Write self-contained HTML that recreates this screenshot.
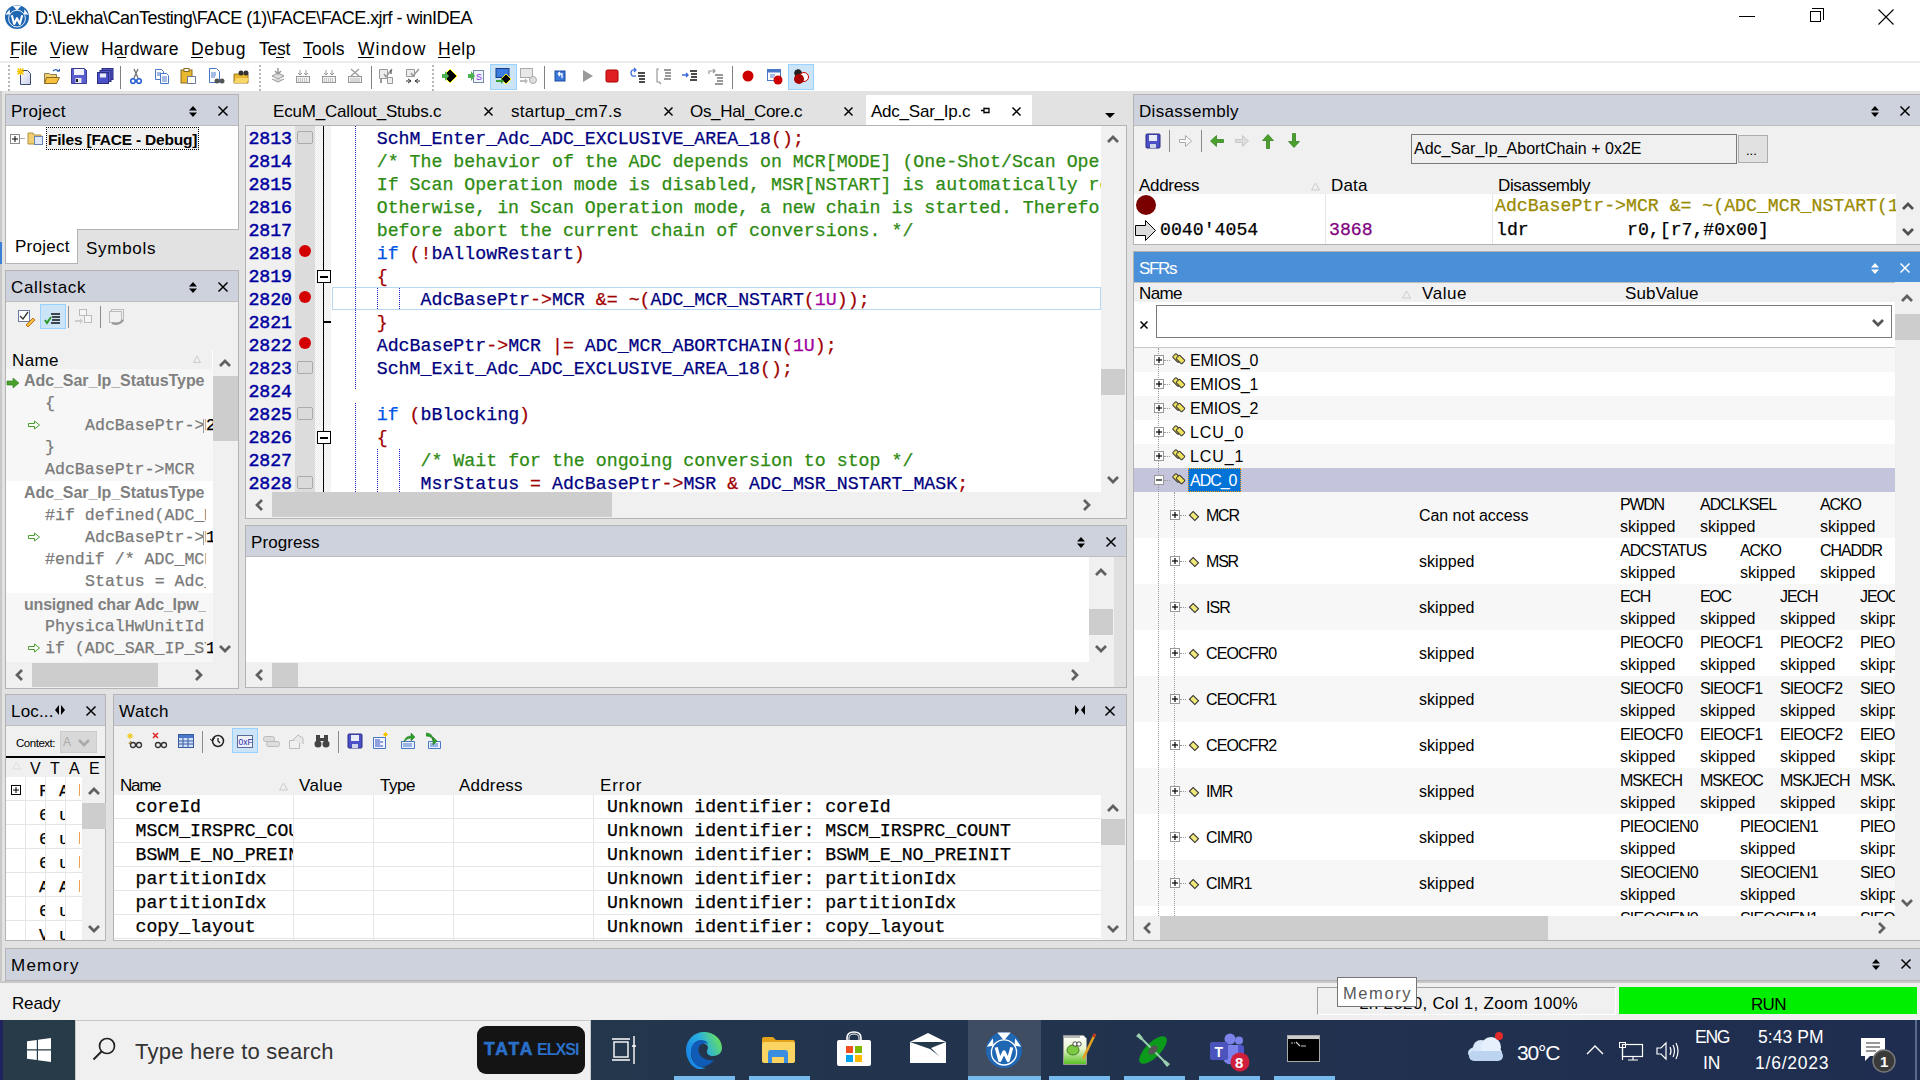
<!DOCTYPE html><html><head><meta charset="utf-8"><title>winIDEA</title><style>
*{margin:0;padding:0;box-sizing:border-box}
html,body{width:1920px;height:1080px;overflow:hidden;background:#e2e2e2}
.a{position:absolute}
.t{white-space:pre}
svg{position:absolute;overflow:visible}
</style></head><body><div class="a" style="left:0px;top:0px;width:1920px;height:91px;background:#ffffff;"></div>
<div class="a" style="left:0px;top:61px;width:1920px;height:2px;background:#ececec;"></div>
<div class="a" style="left:0px;top:91px;width:2px;height:929px;background:#c8c8c8;"></div>
<div class="a" style="left:0px;top:242px;width:2px;height:22px;background:#3a7fd5;"></div>
<svg style="left:5px;top:5px" width="24" height="24" viewBox="0 0 24 24"><circle cx="12" cy="12" r="12" fill="#1f66b3"/><path d="M7.5 0.4H16.5L12 5.6z" fill="#fff"/><path d="M0.5 9.8L4.6 4.2L5 9.2z" fill="#fff"/><path d="M23.5 9.8L19.4 4.2L19 9.2z" fill="#fff"/><circle cx="12" cy="13.6" r="8.4" fill="#1f66b3" stroke="#fff" stroke-width="0.9"/><path d="M6.8 10.2L9.2 19L12 13.2L14.8 19L17.2 10.2" fill="none" stroke="#fff" stroke-width="2.1" stroke-linejoin="round"/></svg>
<div class="a t" id="t1" style="left:35px;top:8.76px;font-family:'Liberation Sans',sans-serif;font-size:18px;line-height:18px;color:#000;letter-spacing:-0.513px;">D:\Lekha\CanTesting\FACE (1)\FACE\FACE.xjrf - winIDEA</div>
<div class="a" style="left:1739px;top:16px;width:16px;height:1px;background:#000;"></div>
<div class="a" style="left:1810px;top:11px;width:11px;height:11px;border:1px solid #000"></div>
<div class="a" style="left:1812px;top:8px;width:12px;height:12px;border-top:1px solid #000;border-right:1px solid #000"></div>
<svg style="left:1878px;top:9px" width="16" height="16"><path d="M0.5 0.5 L15.5 15.5 M15.5 0.5 L0.5 15.5" stroke="#000" stroke-width="1.1"/></svg>
<div class="a t" id="t2" style="left:10px;top:41.19px;font-family:'Liberation Sans',sans-serif;font-size:17.5px;line-height:17.5px;color:#000;letter-spacing:-0.234px;">File</div>
<div class="a t" id="t3" style="left:50px;top:41.19px;font-family:'Liberation Sans',sans-serif;font-size:17.5px;line-height:17.5px;color:#000;letter-spacing:0.292px;">View</div>
<div class="a t" id="t4" style="left:101px;top:41.19px;font-family:'Liberation Sans',sans-serif;font-size:17.5px;line-height:17.5px;color:#000;letter-spacing:0.232px;">Hardware</div>
<div class="a t" id="t5" style="left:191px;top:41.19px;font-family:'Liberation Sans',sans-serif;font-size:17.5px;line-height:17.5px;color:#000;letter-spacing:0.730px;">Debug</div>
<div class="a t" id="t6" style="left:259px;top:41.19px;font-family:'Liberation Sans',sans-serif;font-size:17.5px;line-height:17.5px;color:#000;letter-spacing:-0.203px;">Test</div>
<div class="a t" id="t7" style="left:303px;top:41.19px;font-family:'Liberation Sans',sans-serif;font-size:17.5px;line-height:17.5px;color:#000;letter-spacing:0.160px;">Tools</div>
<div class="a t" id="t8" style="left:358px;top:41.19px;font-family:'Liberation Sans',sans-serif;font-size:17.5px;line-height:17.5px;color:#000;letter-spacing:1.050px;">Window</div>
<div class="a t" id="t9" style="left:438px;top:41.19px;font-family:'Liberation Sans',sans-serif;font-size:17.5px;line-height:17.5px;color:#000;letter-spacing:0.500px;">Help</div>
<div class="a" style="left:10px;top:57px;width:9px;height:1px;background:#000;"></div>
<div class="a" style="left:50px;top:57px;width:10px;height:1px;background:#000;"></div>
<div class="a" style="left:117px;top:57px;width:9px;height:1px;background:#000;"></div>
<div class="a" style="left:191px;top:57px;width:12px;height:1px;background:#000;"></div>
<div class="a" style="left:276px;top:57px;width:8px;height:1px;background:#000;"></div>
<div class="a" style="left:303px;top:57px;width:9px;height:1px;background:#000;"></div>
<div class="a" style="left:358px;top:57px;width:16px;height:1px;background:#000;"></div>
<div class="a" style="left:438px;top:57px;width:12px;height:1px;background:#000;"></div>
<div class="a" style="left:8px;top:65px;width:2px;height:2px;background:#b8b8b8;"></div>
<div class="a" style="left:8px;top:69px;width:2px;height:2px;background:#b8b8b8;"></div>
<div class="a" style="left:8px;top:73px;width:2px;height:2px;background:#b8b8b8;"></div>
<div class="a" style="left:8px;top:77px;width:2px;height:2px;background:#b8b8b8;"></div>
<div class="a" style="left:8px;top:81px;width:2px;height:2px;background:#b8b8b8;"></div>
<div class="a" style="left:8px;top:85px;width:2px;height:2px;background:#b8b8b8;"></div>
<div class="a" style="left:8px;top:89px;width:2px;height:2px;background:#b8b8b8;"></div>
<svg style="left:17px;top:68px" width="16" height="16" viewBox="0 0 16 16"><defs><linearGradient id="nd" x1="0" y1="0" x2="1" y2="1"><stop offset="0" stop-color="#fff"/><stop offset="1" stop-color="#c8d0e8"/></linearGradient></defs><path d="M3.5 2.5h7l3 3v11h-10z" fill="url(#nd)" stroke="#3a4a75"/><path d="M0.5 0.5l6 6M6.5 0.5l-6 6M3.5 0v7M0 3.5h7" stroke="#f5c400" stroke-width="1.3"/></svg>
<svg style="left:44px;top:68px" width="16" height="16" viewBox="0 0 16 16"><path d="M0.5 5.5h5l1 1h6v9h-12z" fill="#f0d070" stroke="#8a7a50"/><path d="M2.5 9.5h13l-3 6h-12z" fill="#f5c040" stroke="#8a6a20"/><path d="M9 3q3-3 5.5 0.5" fill="none" stroke="#2d5fb0" stroke-width="1.2"/><path d="M13 3.5h3v-3z" fill="#2d5fb0"/></svg>
<svg style="left:71px;top:68px" width="16" height="16" viewBox="0 0 16 16"><path d="M0.5 0.5h13l2 2v13h-15z" fill="#5a5ed0" stroke="#3a3d90"/><rect x="3" y="1" width="10" height="6" fill="#f0f2fc"/><rect x="4.5" y="10" width="6" height="5" fill="#e8e8f0"/><rect x="5" y="11" width="2" height="3" fill="#222"/></svg>
<svg style="left:97px;top:68px" width="16" height="16" viewBox="0 0 16 16"><rect x="5" y="0.5" width="11" height="11" fill="#5559c8" stroke="#2a2d80"/><rect x="3" y="2.5" width="11" height="11" fill="#5559c8" stroke="#2a2d80"/><rect x="0.5" y="4.5" width="11" height="11" fill="#4b4fc8" stroke="#2a2d80"/><rect x="3" y="5.5" width="6" height="4" fill="#e8ecf8"/></svg>
<div class="a" style="left:120px;top:66px;width:1px;height:23px;background:#808080;"></div>
<svg style="left:128px;top:68px" width="16" height="16" viewBox="0 0 16 16"><path d="M6 1l4 9M10 1l-4 9" stroke="#707070" stroke-width="1.3"/><circle cx="5" cy="13" r="2.3" fill="none" stroke="#2a5fd0" stroke-width="1.6"/><circle cx="11" cy="13" r="2.3" fill="none" stroke="#2a5fd0" stroke-width="1.6"/></svg>
<svg style="left:154px;top:68px" width="16" height="16" viewBox="0 0 16 16"><path d="M1.5 1.5h6l2 2v8h-8z" fill="#fff" stroke="#4a78c8"/><path d="M6.5 5.5h6l2 2v8h-8z" fill="#fff" stroke="#4a78c8"/><path d="M3 5h4M3 7h4M8 9h5M8 11h5M8 13h5" stroke="#4a78c8"/></svg>
<svg style="left:180px;top:68px" width="16" height="16" viewBox="0 0 16 16"><rect x="1" y="2" width="11" height="13" fill="#e8b830" stroke="#8a6a20"/><rect x="4" y="0.5" width="5" height="3" fill="#fff" stroke="#8a6a20"/><path d="M7.5 8.5h8v7h-8z" fill="#fff" stroke="#6a7a95"/></svg>
<svg style="left:208px;top:68px" width="16" height="16" viewBox="0 0 16 16"><path d="M1.5 0.5h7l3 3v11h-10z" fill="#fff" stroke="#4a78c8"/><path d="M3 5h5M3 7h5M3 9h4" stroke="#4a78c8"/><circle cx="9" cy="13" r="2.5" fill="#555"/><circle cx="14" cy="13" r="2.5" fill="#555"/></svg>
<svg style="left:233px;top:68px" width="16" height="16" viewBox="0 0 16 16"><path d="M1 6h14v9H1z" fill="#e8b830" stroke="#9a7a20"/><path d="M3 10h13l-2 5H1z" fill="#f7d667"/><circle cx="8" cy="5" r="2.5" fill="#333"/><circle cx="13" cy="5" r="2.5" fill="#333"/></svg>
<div class="a" style="left:259px;top:65px;width:2px;height:2px;background:#b8b8b8;"></div>
<div class="a" style="left:259px;top:69px;width:2px;height:2px;background:#b8b8b8;"></div>
<div class="a" style="left:259px;top:73px;width:2px;height:2px;background:#b8b8b8;"></div>
<div class="a" style="left:259px;top:77px;width:2px;height:2px;background:#b8b8b8;"></div>
<div class="a" style="left:259px;top:81px;width:2px;height:2px;background:#b8b8b8;"></div>
<div class="a" style="left:259px;top:85px;width:2px;height:2px;background:#b8b8b8;"></div>
<div class="a" style="left:259px;top:89px;width:2px;height:2px;background:#b8b8b8;"></div>
<svg style="left:270px;top:68px" width="16" height="16" viewBox="0 0 16 16"><path d="M2 8l6-3 6 3-6 3z M2 11l6 3 6-3" fill="#ddd" stroke="#999"/><path d="M8 0v6M5 3l3 3 3-3" stroke="#999" stroke-width="1.5" fill="none"/></svg>
<svg style="left:295px;top:68px" width="16" height="16" viewBox="0 0 16 16"><rect x="1.5" y="8.5" width="13" height="6" fill="#f2f2f2" stroke="#999"/><path d="M3 11h1M5 11h1M7 11h1M9 11h1M11 11h1M3 13h1M5 13h1M7 13h1M9 13h1M11 13h1" stroke="#999"/><path d="M5 2v5M3 5l2 2 2-2M11 2v5M9 5l2 2 2-2" stroke="#999" fill="none"/></svg>
<svg style="left:321px;top:68px" width="16" height="16" viewBox="0 0 16 16"><rect x="1.5" y="8.5" width="13" height="6" fill="#f2f2f2" stroke="#999"/><path d="M3 11h1M5 11h1M7 11h1M9 11h1M11 11h1M3 13h1M5 13h1M7 13h1M9 13h1M11 13h1" stroke="#999"/><path d="M5 2v5M3 5l2 2 2-2M11 2v5M9 5l2 2 2-2" stroke="#999" fill="none"/></svg>
<svg style="left:347px;top:68px" width="16" height="16" viewBox="0 0 16 16"><rect x="1.5" y="8.5" width="13" height="6" fill="#f2f2f2" stroke="#999"/><path d="M3 11h10M3 13h10" stroke="#bbb"/><path d="M4 1l8 7M12 1l-8 7" stroke="#999" stroke-width="1.2"/></svg>
<div class="a" style="left:371px;top:66px;width:1px;height:23px;background:#808080;"></div>
<svg style="left:378px;top:68px" width="17" height="16" viewBox="0 0 17 16"><path d="M1.5 1.5h8v9h-8z" fill="#eee" stroke="#999"/><path d="M6 6l2 3 6-8" stroke="#999" stroke-width="1.5" fill="none"/><path d="M9.5 9.5h5v6h-5z" fill="#eee" stroke="#999"/><path d="M2 12h2M2 14h2M12 3h2M12 5h2" stroke="#333"/></svg>
<svg style="left:405px;top:68px" width="16" height="16" viewBox="0 0 16 16"><path d="M1.5 1.5h8v7h-8z" fill="#eee" stroke="#999"/><path d="M6 5l2 3 6-7" stroke="#999" stroke-width="1.5" fill="none"/><path d="M1 13h5M3 11l3 2-3 2M15 13h-5M13 11l-3 2 3 2" stroke="#333" fill="none"/></svg>
<div class="a" style="left:432px;top:65px;width:2px;height:2px;background:#b8b8b8;"></div>
<div class="a" style="left:432px;top:69px;width:2px;height:2px;background:#b8b8b8;"></div>
<div class="a" style="left:432px;top:73px;width:2px;height:2px;background:#b8b8b8;"></div>
<div class="a" style="left:432px;top:77px;width:2px;height:2px;background:#b8b8b8;"></div>
<div class="a" style="left:432px;top:81px;width:2px;height:2px;background:#b8b8b8;"></div>
<div class="a" style="left:432px;top:85px;width:2px;height:2px;background:#b8b8b8;"></div>
<div class="a" style="left:432px;top:89px;width:2px;height:2px;background:#b8b8b8;"></div>
<svg style="left:442px;top:68px" width="16" height="16" viewBox="0 0 16 16"><path d="M8 1l7 7-7 7-7-7z" fill="#000" stroke="#ff0"/><path d="M0 6h3V3l4 5-4 5v-3H0z" fill="#4caf50"/></svg>
<svg style="left:468px;top:68px" width="16" height="16" viewBox="0 0 16 16"><rect x="5.5" y="2.5" width="10" height="12" fill="#f0f4ff" stroke="#7a8aa5"/><text x="8" y="12" font-size="9" font-family="Liberation Sans" fill="#8a2be2">S</text><path d="M0 6h3V3l4 5-4 5v-3H0z" fill="#4caf50"/></svg>
<div class="a" style="left:490px;top:64px;width:27px;height:26px;background:#cce4f7;border:1px solid #99d1ff;"></div>
<svg style="left:495px;top:68px" width="16" height="17" viewBox="0 0 16 17"><rect x="1" y="0.5" width="13" height="9" fill="#3a7be0" stroke="#1a3a80"/><path d="M9 9l5 5-5 5-5-5z" fill="#000" stroke="#ff0" transform="translate(2,-3)"/><path d="M1 12h5v-2l3 3-3 3v-2H1z" fill="#3aa03a"/></svg>
<svg style="left:519px;top:68px" width="18" height="16" viewBox="0 0 18 16"><rect x="1.5" y="0.5" width="12" height="9" fill="#e8e8e8" stroke="#aaa"/><path d="M1 12h5v-2l3 3-3 3v-2H1z" fill="#bbb"/><circle cx="14" cy="12" r="3.5" fill="#ddd" stroke="#aaa"/></svg>
<div class="a" style="left:544px;top:66px;width:1px;height:23px;background:#808080;"></div>
<svg style="left:553px;top:68px" width="16" height="16" viewBox="0 0 16 16"><rect x="2" y="3" width="10" height="10" fill="#3b78d8" stroke="#1a4aa0"/><path d="M9 10V6H5M5 6l2-2M5 6l2 2" stroke="#fff" stroke-width="1.3" fill="none"/></svg>
<svg style="left:580px;top:68px" width="16" height="16" viewBox="0 0 16 16"><path d="M3 2l10 6-10 6z" fill="#9a9a9a"/></svg>
<svg style="left:604px;top:68px" width="16" height="16" viewBox="0 0 16 16"><rect x="2" y="2" width="12" height="12" rx="1.5" fill="#e02020" stroke="#a00"/></svg>
<svg style="left:630px;top:68px" width="16" height="16" viewBox="0 0 16 16"><path d="M1 5q0-4 5-3M4 0l2 2-2 2" stroke="#3a6ad8" stroke-width="1.3" fill="none"/><path d="M1 5q0 4 5 3" stroke="#3a6ad8" stroke-width="1.3" fill="none"/><path d="M8 5h7M8 8h7M9 11h6M9 14h6" stroke="#111" stroke-width="1.3"/></svg>
<svg style="left:656px;top:68px" width="16" height="16" viewBox="0 0 16 16"><path d="M3 1h-2v13h3M3 14l2 2" stroke="#999" stroke-width="1.2" fill="none"/><path d="M8 2h7M9 5h6M9 8h6M8 11h7" stroke="#333" stroke-width="1.1"/></svg>
<svg style="left:682px;top:68px" width="16" height="16" viewBox="0 0 16 16"><path d="M0 7h6M4 5l2 2-2 2" stroke="#3a6ad8" stroke-width="1.4" fill="none"/><path d="M8 3h7M9 6h6M9 9h6M8 12h7" stroke="#111" stroke-width="1.3"/></svg>
<svg style="left:708px;top:68px" width="16" height="16" viewBox="0 0 16 16"><path d="M1 6v-3h6M5 1l2 2-2 2" stroke="#999" stroke-width="1.2" fill="none"/><path d="M7 7h8M9 10h6M9 13h6M7 16h8" stroke="#333" stroke-width="1.1"/></svg>
<div class="a" style="left:732px;top:66px;width:1px;height:23px;background:#808080;"></div>
<svg style="left:742px;top:68px" width="16" height="16" viewBox="0 0 16 16"><circle cx="6" cy="8" r="5.5" fill="#c00"/></svg>
<svg style="left:767px;top:68px" width="16" height="17" viewBox="0 0 16 17"><rect x="0.5" y="1.5" width="13" height="11" fill="#fff" stroke="#4a78c8"/><rect x="1" y="2" width="12" height="2.5" fill="#4a78c8"/><path d="M3 7h5M3 9h4" stroke="#4a78c8"/><circle cx="11" cy="12" r="4.5" fill="#c00"/></svg>
<div class="a" style="left:788px;top:64px;width:26px;height:26px;background:#cce4f7;border:1px solid #99d1ff;"></div>
<svg style="left:793px;top:68px" width="16" height="16" viewBox="0 0 16 16"><circle cx="5" cy="5" r="3.5" fill="#222" stroke="#222" stroke-dasharray="1.5 1"/><circle cx="11" cy="9" r="4.5" fill="#fff" stroke="#c00"/><circle cx="6" cy="11" r="5" fill="#a00"/></svg>
<div class="a" style="left:5px;top:94px;width:234px;height:136px;background:#fff;border:1px solid #b4b4b4;"></div>
<div class="a" style="left:6px;top:95px;width:232px;height:30px;background:#cdd2dd;"></div>
<div class="a" style="left:6px;top:125px;width:232px;height:1px;background:#bdbdbd;"></div>
<div class="a t" id="t10" style="left:11px;top:102.61px;font-family:'Liberation Sans',sans-serif;font-size:17px;line-height:17px;color:#000;letter-spacing:0.263px;">Project</div>
<svg style="left:188px;top:104.5px" width="10" height="13" viewBox="0 0 10 13"><path d="M1 5.5L5 1L9 5.5z M1 7.5L5 12L9 7.5z" fill="#000"/></svg>
<svg style="left:217.5px;top:105.5px" width="10" height="10" viewBox="0 0 10 10"><path d="M0.5 0.5L9.5 9.5M9.5 0.5L0.5 9.5" stroke="#000" stroke-width="1.45"/></svg>
<svg style="left:10px;top:134px" width="10" height="10" viewBox="0 0 10 10"><rect x="0.5" y="0.5" width="9" height="9" fill="#fff" stroke="#888"/><path d="M2 5h6M5 2v6" stroke="#000"/></svg>
<div class="a" style="left:20px;top:138px;width:5px;height:1px;background:#aaa;"></div>
<svg style="left:27px;top:129px" width="17" height="17" viewBox="0 0 17 17"><path d="M1 4h5l1 2h7v9H1z" fill="#f0d070" stroke="#b09040"/><rect x="7.5" y="7.5" width="8" height="8" fill="#dfe8f8" stroke="#6a85b5"/></svg>
<div class="a" style="left:46px;top:127px;width:153px;height:23px;border:1px dotted #000;background:#f0f0f0"></div>
<div class="a t" id="t11" style="left:48px;top:131.88px;font-family:'Liberation Sans',sans-serif;font-size:15.5px;line-height:15.5px;color:#000;font-weight:700;letter-spacing:-0.200px;">Files [FACE - Debug]</div>
<div class="a" style="left:5px;top:229px;width:73px;height:35px;background:#fff;border:1px solid #b4b4b4;border-top:none"></div>
<div class="a t" id="t12" style="left:15px;top:237.61px;font-family:'Liberation Sans',sans-serif;font-size:17px;line-height:17px;color:#000;letter-spacing:0.263px;">Project</div>
<div class="a t" id="t13" style="left:86px;top:239.61px;font-family:'Liberation Sans',sans-serif;font-size:17px;line-height:17px;color:#000;letter-spacing:0.719px;">Symbols</div>
<div class="a" style="left:5px;top:270px;width:234px;height:419px;background:#f0f0f0;border:1px solid #b4b4b4;"></div>
<div class="a" style="left:6px;top:271px;width:232px;height:30px;background:#cdd2dd;"></div>
<div class="a" style="left:6px;top:301px;width:232px;height:1px;background:#bdbdbd;"></div>
<div class="a t" id="t14" style="left:11px;top:278.61px;font-family:'Liberation Sans',sans-serif;font-size:17px;line-height:17px;color:#000;letter-spacing:0.691px;">Callstack</div>
<svg style="left:188px;top:280.5px" width="10" height="13" viewBox="0 0 10 13"><path d="M1 5.5L5 1L9 5.5z M1 7.5L5 12L9 7.5z" fill="#000"/></svg>
<svg style="left:217.5px;top:281.5px" width="10" height="10" viewBox="0 0 10 10"><path d="M0.5 0.5L9.5 9.5M9.5 0.5L0.5 9.5" stroke="#000" stroke-width="1.45"/></svg>
<svg style="left:18px;top:310px" width="17" height="17" viewBox="0 0 17 17"><rect x="0.5" y="0.5" width="11" height="11" fill="#fff" stroke="#6a7aa5"/><path d="M2 6l3 3 5-7" stroke="#333" stroke-width="1.3" fill="none"/><path d="M8 15l7-7 2 2-7 7z" fill="#f0c040" stroke="#c07020"/></svg>
<div class="a" style="left:40px;top:304px;width:26px;height:25px;background:#cce4f7;border:1px solid #99d1ff;"></div>
<svg style="left:44px;top:308px" width="17" height="17" viewBox="0 0 17 17"><path d="M1 12l2 3 4-6" stroke="#2a9a2a" stroke-width="2" fill="none"/><path d="M7 6h9M8 9h8M8 12h8M7 15h9" stroke="#111" stroke-width="1.4"/></svg>
<div class="a" style="left:68px;top:306px;width:1px;height:22px;background:#8c8c8c;"></div>
<svg style="left:75px;top:309px" width="17" height="17" viewBox="0 0 17 17"><rect x="4.5" y="0.5" width="7" height="6" fill="#f5f5f5" stroke="#bbb"/><rect x="9.5" y="6.5" width="7" height="7" fill="#f5f5f5" stroke="#bbb"/><path d="M0 11h5v-2l3 3-3 3v-2H0z" fill="#ccc"/></svg>
<div class="a" style="left:100px;top:306px;width:1px;height:22px;background:#8c8c8c;"></div>
<svg style="left:108px;top:309px" width="17" height="17" viewBox="0 0 17 17"><rect x="3.5" y="0.5" width="12" height="11" fill="#f0f0f0" stroke="#bbb"/><rect x="1.5" y="2.5" width="12" height="11" fill="#f0f0f0" stroke="#bbb"/><path d="M4 14q6 3 11-3" stroke="#999" stroke-width="2" fill="none"/></svg>
<div class="a t" id="t15" style="left:12px;top:351.61px;font-family:'Liberation Sans',sans-serif;font-size:17px;line-height:17px;color:#000;letter-spacing:0.380px;">Name</div>
<div class="a" style="left:212px;top:350px;width:1px;height:19px;background:#fff;"></div>
<svg style="left:193px;top:355px" width="8" height="8" viewBox="0 0 8 8"><path d="M0.5 7.5L4 1L7.5 7.5z" fill="none" stroke="#ccc"/></svg>
<div class="a" style="left:6px;top:369px;width:207px;height:293px;overflow:hidden;background:#fff;">
<div class="a" style="left:0px;top:0px;width:207px;height:112px;background:#f7f7f7;"></div>
<div class="a" style="left:0px;top:224px;width:207px;height:69px;background:#f7f7f7;"></div>
<div class="a" style="left:0;top:0;width:200px;height:293px;overflow:hidden">
<svg style="left:1px;top:9px" width="12" height="10" viewBox="0 0 12 10"><path d="M0 3h6V0l6 5-6 5V7H0z" fill="#4aa02a" stroke="#2a7a1a" stroke-width="0.6"/></svg>
<div class="a t" id="t16" style="left:18px;top:4.46px;font-family:'Liberation Sans',sans-serif;font-size:16px;line-height:16px;color:#808080;font-weight:700;letter-spacing:-0.075px;">Adc_Sar_Ip_StatusType</div>
<div class="a t" id="t17" style="left:39px;top:27.28px;font-family:'Liberation Mono',monospace;font-size:16.6px;line-height:16.6px;color:#7a7a7a;-webkit-text-stroke-width:0.25px;">{</div>
<svg style="left:22px;top:51px" width="12" height="10" viewBox="0 0 12 10"><path d="M0.5 3.5h6V1l5 4-5 4V6.5h-6z" fill="#fff" stroke="#4aa02a"/></svg>
<div class="a t" id="t18" style="left:79px;top:49.28px;font-family:'Liberation Mono',monospace;font-size:16.6px;line-height:16.6px;color:#7a7a7a;-webkit-text-stroke-width:0.25px;">AdcBasePtr-&gt;MCR &amp;= ~(ADC_MCR_NSTART(1U));</div>
<div class="a t" id="t19" style="left:39px;top:71.28px;font-family:'Liberation Mono',monospace;font-size:16.6px;line-height:16.6px;color:#7a7a7a;-webkit-text-stroke-width:0.25px;">}</div>
<div class="a t" id="t20" style="left:39px;top:93.28px;font-family:'Liberation Mono',monospace;font-size:16.6px;line-height:16.6px;color:#7a7a7a;-webkit-text-stroke-width:0.25px;">AdcBasePtr-&gt;MCR</div>
<div class="a t" id="t21" style="left:18px;top:116.46px;font-family:'Liberation Sans',sans-serif;font-size:16px;line-height:16px;color:#808080;font-weight:700;letter-spacing:-0.075px;">Adc_Sar_Ip_StatusType</div>
<div class="a t" id="t22" style="left:39px;top:139.28px;font-family:'Liberation Mono',monospace;font-size:16.6px;line-height:16.6px;color:#7a7a7a;-webkit-text-stroke-width:0.25px;">#if defined(ADC_MCR_ACKO_MASK)</div>
<svg style="left:22px;top:163px" width="12" height="10" viewBox="0 0 12 10"><path d="M0.5 3.5h6V1l5 4-5 4V6.5h-6z" fill="#fff" stroke="#4aa02a"/></svg>
<div class="a t" id="t23" style="left:79px;top:161.28px;font-family:'Liberation Mono',monospace;font-size:16.6px;line-height:16.6px;color:#7a7a7a;-webkit-text-stroke-width:0.25px;">AdcBasePtr-&gt;MCR</div>
<div class="a t" id="t24" style="left:39px;top:183.28px;font-family:'Liberation Mono',monospace;font-size:16.6px;line-height:16.6px;color:#7a7a7a;-webkit-text-stroke-width:0.25px;">#endif /* ADC_MCR_ACKO_MASK */</div>
<div class="a t" id="t25" style="left:79px;top:205.28px;font-family:'Liberation Mono',monospace;font-size:16.6px;line-height:16.6px;color:#7a7a7a;-webkit-text-stroke-width:0.25px;">Status = Adc_Sar_CheckAck</div>
<div class="a t" id="t26" style="left:18px;top:228.46px;font-family:'Liberation Sans',sans-serif;font-size:16px;line-height:16px;color:#808080;font-weight:700;letter-spacing:-0.209px;">unsigned char Adc_Ipw_</div>
<div class="a t" id="t27" style="left:39px;top:250.28px;font-family:'Liberation Mono',monospace;font-size:16.6px;line-height:16.6px;color:#7a7a7a;-webkit-text-stroke-width:0.25px;">PhysicalHwUnitId</div>
<svg style="left:22px;top:274px" width="12" height="10" viewBox="0 0 12 10"><path d="M0.5 3.5h6V1l5 4-5 4V6.5h-6z" fill="#fff" stroke="#4aa02a"/></svg>
<div class="a t" id="t28" style="left:39px;top:272.28px;font-family:'Liberation Mono',monospace;font-size:16.6px;line-height:16.6px;color:#7a7a7a;-webkit-text-stroke-width:0.25px;">if (ADC_SAR_IP_STATUS_SUCCESS</div>
</div>
<div class="a" style="left:197px;top:50px;width:1px;height:14px;background:#999;"></div>
<div class="a t" id="t29" style="left:200px;top:49.28px;font-family:'Liberation Mono',monospace;font-size:16.6px;line-height:16.6px;color:#000;-webkit-text-stroke-width:0.25px;">2820</div>
<div class="a" style="left:197px;top:162px;width:1px;height:14px;background:#999;"></div>
<div class="a t" id="t30" style="left:200px;top:161.28px;font-family:'Liberation Mono',monospace;font-size:16.6px;line-height:16.6px;color:#000;-webkit-text-stroke-width:0.25px;">1</div>
<div class="a t" id="t31" style="left:200px;top:272.28px;font-family:'Liberation Mono',monospace;font-size:16.6px;line-height:16.6px;color:#000;-webkit-text-stroke-width:0.25px;">1</div>
</div>
<svg style="left:219.0px;top:358.5px" width="12" height="9" viewBox="0 0 12 9"><path d="M1 7L6 2L11 7" fill="none" stroke="#606060" stroke-width="2.7"/></svg>
<div class="a" style="left:213px;top:376px;width:25px;height:65px;background:#cdcdcd;"></div>
<svg style="left:219.0px;top:643.5px" width="12" height="9" viewBox="0 0 12 9"><path d="M1 2L6 7L11 2" fill="none" stroke="#606060" stroke-width="2.7"/></svg>
<svg style="left:14.5px;top:669.0px" width="9" height="12" viewBox="0 0 9 12"><path d="M7 1L2 6L7 11" fill="none" stroke="#606060" stroke-width="2.7"/></svg>
<div class="a" style="left:32px;top:663px;width:126px;height:24px;background:#cdcdcd;"></div>
<svg style="left:193.5px;top:669.0px" width="9" height="12" viewBox="0 0 9 12"><path d="M2 1L7 6L2 11" fill="none" stroke="#606060" stroke-width="2.7"/></svg>
<div class="a" style="left:5px;top:694px;width:101px;height:247px;background:#f0f0f0;border:1px solid #b4b4b4;"></div>
<div class="a" style="left:6px;top:695px;width:99px;height:30px;background:#cdd2dd;"></div>
<div class="a" style="left:6px;top:725px;width:99px;height:1px;background:#bdbdbd;"></div>
<div class="a t" id="t32" style="left:11px;top:702.61px;font-family:'Liberation Sans',sans-serif;font-size:17px;line-height:17px;color:#000;letter-spacing:0.181px;">Loc...</div>
<svg style="left:55px;top:705px" width="10" height="10" viewBox="0 0 10 10"><path d="M4 0L0 5L4 10z M6 0L10 5L6 10z" fill="#000"/></svg>
<svg style="left:85.5px;top:705.5px" width="10" height="10" viewBox="0 0 10 10"><path d="M0.5 0.5L9.5 9.5M9.5 0.5L0.5 9.5" stroke="#000" stroke-width="1.45"/></svg>
<div class="a t" id="t33" style="left:16px;top:738.27px;font-family:'Liberation Sans',sans-serif;font-size:11.5px;line-height:11.5px;color:#000;letter-spacing:-0.475px;">Context:</div>
<div class="a" style="left:60px;top:731px;width:37px;height:22px;background:#d8d8d8;border:1px solid #ccc;"></div>
<div class="a t" id="t34" style="left:63px;top:735.84px;font-family:'Liberation Sans',sans-serif;font-size:12px;line-height:12px;color:#aaa;">A</div>
<svg style="left:78.0px;top:737.5px" width="12" height="9" viewBox="0 0 12 9"><path d="M1 2L6 7L11 2" fill="none" stroke="#aaa" stroke-width="2.7"/></svg>
<div class="a" style="left:6px;top:756px;width:99px;height:2px;background:#000;"></div>
<svg style="left:12px;top:761px" width="10" height="10" viewBox="0 0 10 10"><path d="M0.5 8L4.5 1L8.5 8z" fill="none" stroke="#ddd"/></svg>
<div class="a t" id="t35" style="left:30px;top:761.46px;font-family:'Liberation Sans',sans-serif;font-size:16px;line-height:16px;color:#000;">V</div>
<div class="a t" id="t36" style="left:50px;top:761.46px;font-family:'Liberation Sans',sans-serif;font-size:16px;line-height:16px;color:#000;">T</div>
<div class="a t" id="t37" style="left:69px;top:761.46px;font-family:'Liberation Sans',sans-serif;font-size:16px;line-height:16px;color:#000;">A</div>
<div class="a t" id="t38" style="left:89px;top:761.46px;font-family:'Liberation Sans',sans-serif;font-size:16px;line-height:16px;color:#000;">E</div>
<div class="a" style="left:6px;top:777px;width:76px;height:163px;overflow:hidden;background:#fff;">
<div class="a" style="left:0px;top:23px;width:76px;height:1px;background:#e6e6e6;"></div>
<div class="a" style="left:0px;top:47px;width:76px;height:1px;background:#e6e6e6;"></div>
<div class="a" style="left:0px;top:71px;width:76px;height:1px;background:#e6e6e6;"></div>
<div class="a" style="left:0px;top:95px;width:76px;height:1px;background:#e6e6e6;"></div>
<div class="a" style="left:0px;top:119px;width:76px;height:1px;background:#e6e6e6;"></div>
<div class="a" style="left:0px;top:143px;width:76px;height:1px;background:#e6e6e6;"></div>
<div class="a" style="left:0px;top:167px;width:76px;height:1px;background:#e6e6e6;"></div>
<div class="a" style="left:19px;top:0px;width:1px;height:163px;background:#e6e6e6;"></div>
<div class="a" style="left:39px;top:0px;width:1px;height:163px;background:#e6e6e6;"></div>
<div class="a" style="left:59px;top:0px;width:1px;height:163px;background:#e6e6e6;"></div>
<svg style="left:5px;top:8px" width="10" height="10" viewBox="0 0 10 10"><rect x="0.5" y="0.5" width="9" height="9" fill="#fff" stroke="#000"/><path d="M2 5h6M5 2v6" stroke="#000"/></svg>
<div class="a" style="left:20px;top:0px;width:19px;height:23px;overflow:hidden;">
<div class="a t" id="t39" style="left:13px;top:5.97px;font-family:'Liberation Mono',monospace;font-size:17px;line-height:17px;color:#000;-webkit-text-stroke-width:0.25px;">F</div>
</div>
<div class="a" style="left:40px;top:0px;width:19px;height:23px;overflow:hidden;">
<div class="a t" id="t40" style="left:13px;top:5.97px;font-family:'Liberation Mono',monospace;font-size:17px;line-height:17px;color:#000;-webkit-text-stroke-width:0.25px;">A</div>
</div>
<div class="a" style="left:73px;top:7px;width:1px;height:12px;background:#f0a050;"></div>
<div class="a" style="left:20px;top:24px;width:19px;height:23px;overflow:hidden;">
<div class="a t" id="t41" style="left:13px;top:5.97px;font-family:'Liberation Mono',monospace;font-size:17px;line-height:17px;color:#000;-webkit-text-stroke-width:0.25px;">6</div>
</div>
<div class="a" style="left:40px;top:24px;width:19px;height:23px;overflow:hidden;">
<div class="a t" id="t42" style="left:13px;top:5.97px;font-family:'Liberation Mono',monospace;font-size:17px;line-height:17px;color:#000;-webkit-text-stroke-width:0.25px;">u</div>
</div>
<div class="a" style="left:20px;top:48px;width:19px;height:23px;overflow:hidden;">
<div class="a t" id="t43" style="left:13px;top:5.97px;font-family:'Liberation Mono',monospace;font-size:17px;line-height:17px;color:#000;-webkit-text-stroke-width:0.25px;">6</div>
</div>
<div class="a" style="left:40px;top:48px;width:19px;height:23px;overflow:hidden;">
<div class="a t" id="t44" style="left:13px;top:5.97px;font-family:'Liberation Mono',monospace;font-size:17px;line-height:17px;color:#000;-webkit-text-stroke-width:0.25px;">u</div>
</div>
<div class="a" style="left:73px;top:55px;width:1px;height:12px;background:#f0a050;"></div>
<div class="a" style="left:20px;top:72px;width:19px;height:23px;overflow:hidden;">
<div class="a t" id="t45" style="left:13px;top:5.97px;font-family:'Liberation Mono',monospace;font-size:17px;line-height:17px;color:#000;-webkit-text-stroke-width:0.25px;">6</div>
</div>
<div class="a" style="left:40px;top:72px;width:19px;height:23px;overflow:hidden;">
<div class="a t" id="t46" style="left:13px;top:5.97px;font-family:'Liberation Mono',monospace;font-size:17px;line-height:17px;color:#000;-webkit-text-stroke-width:0.25px;">u</div>
</div>
<div class="a" style="left:73px;top:79px;width:1px;height:12px;background:#f0a050;"></div>
<div class="a" style="left:20px;top:96px;width:19px;height:23px;overflow:hidden;">
<div class="a t" id="t47" style="left:13px;top:5.97px;font-family:'Liberation Mono',monospace;font-size:17px;line-height:17px;color:#000;-webkit-text-stroke-width:0.25px;">A</div>
</div>
<div class="a" style="left:40px;top:96px;width:19px;height:23px;overflow:hidden;">
<div class="a t" id="t48" style="left:13px;top:5.97px;font-family:'Liberation Mono',monospace;font-size:17px;line-height:17px;color:#000;-webkit-text-stroke-width:0.25px;">A</div>
</div>
<div class="a" style="left:73px;top:103px;width:1px;height:12px;background:#f0a050;"></div>
<div class="a" style="left:20px;top:120px;width:19px;height:23px;overflow:hidden;">
<div class="a t" id="t49" style="left:13px;top:5.97px;font-family:'Liberation Mono',monospace;font-size:17px;line-height:17px;color:#000;-webkit-text-stroke-width:0.25px;">6</div>
</div>
<div class="a" style="left:40px;top:120px;width:19px;height:23px;overflow:hidden;">
<div class="a t" id="t50" style="left:13px;top:5.97px;font-family:'Liberation Mono',monospace;font-size:17px;line-height:17px;color:#000;-webkit-text-stroke-width:0.25px;">u</div>
</div>
<div class="a" style="left:20px;top:144px;width:19px;height:23px;overflow:hidden;">
<div class="a t" id="t51" style="left:13px;top:5.97px;font-family:'Liberation Mono',monospace;font-size:17px;line-height:17px;color:#000;-webkit-text-stroke-width:0.25px;">V</div>
</div>
<div class="a" style="left:40px;top:144px;width:19px;height:23px;overflow:hidden;">
<div class="a t" id="t52" style="left:13px;top:5.97px;font-family:'Liberation Mono',monospace;font-size:17px;line-height:17px;color:#000;-webkit-text-stroke-width:0.25px;">u</div>
</div>
</div>
<svg style="left:88.0px;top:786.5px" width="12" height="9" viewBox="0 0 12 9"><path d="M1 7L6 2L11 7" fill="none" stroke="#606060" stroke-width="2.7"/></svg>
<div class="a" style="left:82px;top:803px;width:24px;height:26px;background:#cdcdcd;"></div>
<svg style="left:88.0px;top:923.5px" width="12" height="9" viewBox="0 0 12 9"><path d="M1 2L6 7L11 2" fill="none" stroke="#606060" stroke-width="2.7"/></svg>
<div class="a" style="left:245px;top:91px;width:882px;height:34px;background:#e2e2e2;"></div>
<div class="a" style="left:866px;top:95px;width:166px;height:30px;background:#fff;"></div>
<div class="a t" id="t53" style="left:273px;top:102.61px;font-family:'Liberation Sans',sans-serif;font-size:17px;line-height:17px;color:#000;letter-spacing:-0.183px;">EcuM_Callout_Stubs.c</div>
<svg style="left:484.0px;top:106.5px" width="9" height="9" viewBox="0 0 9 9"><path d="M0.5 0.5L8.5 8.5M8.5 0.5L0.5 8.5" stroke="#000" stroke-width="1.45"/></svg>
<div class="a t" id="t54" style="left:511px;top:102.61px;font-family:'Liberation Sans',sans-serif;font-size:17px;line-height:17px;color:#000;letter-spacing:0.311px;">startup_cm7.s</div>
<svg style="left:663.5px;top:106.5px" width="9" height="9" viewBox="0 0 9 9"><path d="M0.5 0.5L8.5 8.5M8.5 0.5L0.5 8.5" stroke="#000" stroke-width="1.45"/></svg>
<div class="a t" id="t55" style="left:690px;top:102.61px;font-family:'Liberation Sans',sans-serif;font-size:17px;line-height:17px;color:#000;letter-spacing:-0.310px;">Os_Hal_Core.c</div>
<svg style="left:844.0px;top:106.5px" width="9" height="9" viewBox="0 0 9 9"><path d="M0.5 0.5L8.5 8.5M8.5 0.5L0.5 8.5" stroke="#000" stroke-width="1.45"/></svg>
<div class="a t" id="t56" style="left:871px;top:102.61px;font-family:'Liberation Sans',sans-serif;font-size:17px;line-height:17px;color:#000;letter-spacing:-0.233px;">Adc_Sar_Ip.c</div>
<svg style="left:981px;top:106px" width="10" height="10" viewBox="0 0 10 10"><path d="M0 4.5h3M3 1.5v6M3 2.5h5v4H3" fill="none" stroke="#000" stroke-width="1.3"/></svg>
<svg style="left:1012.0px;top:106.5px" width="9" height="9" viewBox="0 0 9 9"><path d="M0.5 0.5L8.5 8.5M8.5 0.5L0.5 8.5" stroke="#000" stroke-width="1.45"/></svg>
<svg style="left:1105px;top:113px" width="10" height="6" viewBox="0 0 10 6"><path d="M0 0h10L5 5z" fill="#000"/></svg>
<div class="a" style="left:245px;top:125px;width:882px;height:394px;background:#fff;border:1px solid #b4b4b4;"></div>
<div class="a" style="left:246px;top:126px;width:49px;height:366px;background:#f0f0f0;"></div>
<div class="a" style="left:295px;top:126px;width:20px;height:366px;background:#dcdcdc;"></div>
<div class="a" style="left:315px;top:126px;width:16px;height:366px;background:repeating-conic-gradient(#ececec 0 25%,#fafafa 0 50%) 0 0/2px 2px;"></div>
<div class="a" style="left:323px;top:126px;width:1px;height:366px;background:#000;"></div>
<div class="a" style="left:317px;top:270px;width:14px;height:13px;background:#fff;border:1.5px solid #000;"></div>
<div class="a" style="left:320px;top:276px;width:8px;height:1.5px;background:#000;"></div>
<div class="a" style="left:317px;top:431px;width:14px;height:13px;background:#fff;border:1.5px solid #000;"></div>
<div class="a" style="left:320px;top:437px;width:8px;height:1.5px;background:#000;"></div>
<div class="a" style="left:323px;top:321px;width:8px;height:1.5px;background:#000;"></div>
<div class="a" style="left:332px;top:287px;width:769px;height:23px;border:1px solid #b8d8f4;"></div>
<div class="a" style="left:355px;top:126px;width:1px;height:263px;border-left:1px dotted #2020c0;"></div>
<div class="a" style="left:355px;top:403px;width:1px;height:89px;border-left:1px dotted #2020c0;"></div>
<div class="a" style="left:377px;top:288px;width:1px;height:21px;border-left:1px dotted #2020c0;"></div>
<div class="a" style="left:399px;top:288px;width:1px;height:21px;border-left:1px dotted #2020c0;"></div>
<div class="a" style="left:377px;top:449px;width:1px;height:43px;border-left:1px dotted #2020c0;"></div>
<div class="a" style="left:399px;top:449px;width:1px;height:43px;border-left:1px dotted #2020c0;"></div>
<div class="a" style="left:246px;top:126px;width:855px;height:366px;overflow:hidden;">
<div class="a t" id="t57" style="left:2.5px;top:4.01px;font-family:'Liberation Mono',monospace;font-size:18.25px;line-height:18.25px;color:#0000a0;letter-spacing:-0.104px;-webkit-text-stroke:0.45px #0000a0;">2813</div>
<div class="a" style="left:51px;top:5px;width:16px;height:13px;background:#dadada;border:1px solid #ababab;border-radius:2px;"></div>
<div class="a t" id="t58" style="left:86.89999999999998px;top:4.01px;font-family:'Liberation Mono',monospace;font-size:18.25px;line-height:18.25px;color:#000080;-webkit-text-stroke-width:0.25px;">    <span style="color:#000080">SchM_Enter_Adc_ADC_EXCLUSIVE_AREA_18</span><span style="color:#a00000">(</span><span style="color:#a00000">)</span><span style="color:#a00000">;</span></div>
<div class="a t" id="t59" style="left:2.5px;top:27.01px;font-family:'Liberation Mono',monospace;font-size:18.25px;line-height:18.25px;color:#0000a0;letter-spacing:-0.104px;-webkit-text-stroke:0.45px #0000a0;">2814</div>
<div class="a t" id="t60" style="left:86.89999999999998px;top:27.01px;font-family:'Liberation Mono',monospace;font-size:18.25px;line-height:18.25px;color:#000080;-webkit-text-stroke-width:0.25px;"><span style="color:#2e8b12">    /* The behavior of the ADC depends on MCR[MODE] (One-Shot/Scan Operation).</span></div>
<div class="a t" id="t61" style="left:2.5px;top:50.01px;font-family:'Liberation Mono',monospace;font-size:18.25px;line-height:18.25px;color:#0000a0;letter-spacing:-0.104px;-webkit-text-stroke:0.45px #0000a0;">2815</div>
<div class="a t" id="t62" style="left:86.89999999999998px;top:50.01px;font-family:'Liberation Mono',monospace;font-size:18.25px;line-height:18.25px;color:#000080;-webkit-text-stroke-width:0.25px;"><span style="color:#2e8b12">    If Scan Operation mode is disabled, MSR[NSTART] is automatically reset</span></div>
<div class="a t" id="t63" style="left:2.5px;top:73.01px;font-family:'Liberation Mono',monospace;font-size:18.25px;line-height:18.25px;color:#0000a0;letter-spacing:-0.104px;-webkit-text-stroke:0.45px #0000a0;">2816</div>
<div class="a t" id="t64" style="left:86.89999999999998px;top:73.01px;font-family:'Liberation Mono',monospace;font-size:18.25px;line-height:18.25px;color:#000080;-webkit-text-stroke-width:0.25px;"><span style="color:#2e8b12">    Otherwise, in Scan Operation mode, a new chain is started. Therefore</span></div>
<div class="a t" id="t65" style="left:2.5px;top:96.01px;font-family:'Liberation Mono',monospace;font-size:18.25px;line-height:18.25px;color:#0000a0;letter-spacing:-0.104px;-webkit-text-stroke:0.45px #0000a0;">2817</div>
<div class="a t" id="t66" style="left:86.89999999999998px;top:96.01px;font-family:'Liberation Mono',monospace;font-size:18.25px;line-height:18.25px;color:#000080;-webkit-text-stroke-width:0.25px;"><span style="color:#2e8b12">    before abort the current chain of conversions. */</span></div>
<div class="a t" id="t67" style="left:2.5px;top:119.01px;font-family:'Liberation Mono',monospace;font-size:18.25px;line-height:18.25px;color:#0000a0;letter-spacing:-0.104px;-webkit-text-stroke:0.45px #0000a0;">2818</div>
<svg style="left:53px;top:119px" width="12" height="12" viewBox="0 0 12 12"><circle cx="6" cy="6" r="6" fill="#d40000"/></svg>
<div class="a t" id="t68" style="left:86.89999999999998px;top:119.01px;font-family:'Liberation Mono',monospace;font-size:18.25px;line-height:18.25px;color:#000080;-webkit-text-stroke-width:0.25px;">    <span style="color:#0055e6">if</span> <span style="color:#a00000">(</span><span style="color:#a00000">!</span><span style="color:#000080">bAllowRestart</span><span style="color:#a00000">)</span></div>
<div class="a t" id="t69" style="left:2.5px;top:142.01px;font-family:'Liberation Mono',monospace;font-size:18.25px;line-height:18.25px;color:#0000a0;letter-spacing:-0.104px;-webkit-text-stroke:0.45px #0000a0;">2819</div>
<div class="a t" id="t70" style="left:86.89999999999998px;top:142.01px;font-family:'Liberation Mono',monospace;font-size:18.25px;line-height:18.25px;color:#000080;-webkit-text-stroke-width:0.25px;">    <span style="color:#a00000">{</span></div>
<div class="a t" id="t71" style="left:2.5px;top:165.01px;font-family:'Liberation Mono',monospace;font-size:18.25px;line-height:18.25px;color:#0000a0;letter-spacing:-0.104px;-webkit-text-stroke:0.45px #0000a0;">2820</div>
<svg style="left:53px;top:165px" width="12" height="12" viewBox="0 0 12 12"><circle cx="6" cy="6" r="6" fill="#d40000"/></svg>
<div class="a t" id="t72" style="left:86.89999999999998px;top:165.01px;font-family:'Liberation Mono',monospace;font-size:18.25px;line-height:18.25px;color:#000080;-webkit-text-stroke-width:0.25px;">        <span style="color:#000080">AdcBasePtr</span><span style="color:#a00000">-</span><span style="color:#a00000">&gt;</span><span style="color:#000080">MCR</span> <span style="color:#a00000">&amp;</span><span style="color:#a00000">=</span> <span style="color:#a00000">~</span><span style="color:#a00000">(</span><span style="color:#000080">ADC_MCR_NSTART</span><span style="color:#a00000">(</span><span style="color:#a000a0">1U</span><span style="color:#a00000">)</span><span style="color:#a00000">)</span><span style="color:#a00000">;</span></div>
<div class="a t" id="t73" style="left:2.5px;top:188.01px;font-family:'Liberation Mono',monospace;font-size:18.25px;line-height:18.25px;color:#0000a0;letter-spacing:-0.104px;-webkit-text-stroke:0.45px #0000a0;">2821</div>
<div class="a t" id="t74" style="left:86.89999999999998px;top:188.01px;font-family:'Liberation Mono',monospace;font-size:18.25px;line-height:18.25px;color:#000080;-webkit-text-stroke-width:0.25px;">    <span style="color:#a00000">}</span></div>
<div class="a t" id="t75" style="left:2.5px;top:211.01px;font-family:'Liberation Mono',monospace;font-size:18.25px;line-height:18.25px;color:#0000a0;letter-spacing:-0.104px;-webkit-text-stroke:0.45px #0000a0;">2822</div>
<svg style="left:53px;top:211px" width="12" height="12" viewBox="0 0 12 12"><circle cx="6" cy="6" r="6" fill="#d40000"/></svg>
<div class="a t" id="t76" style="left:86.89999999999998px;top:211.01px;font-family:'Liberation Mono',monospace;font-size:18.25px;line-height:18.25px;color:#000080;-webkit-text-stroke-width:0.25px;">    <span style="color:#000080">AdcBasePtr</span><span style="color:#a00000">-</span><span style="color:#a00000">&gt;</span><span style="color:#000080">MCR</span> <span style="color:#a00000">|</span><span style="color:#a00000">=</span> <span style="color:#000080">ADC_MCR_ABORTCHAIN</span><span style="color:#a00000">(</span><span style="color:#a000a0">1U</span><span style="color:#a00000">)</span><span style="color:#a00000">;</span></div>
<div class="a t" id="t77" style="left:2.5px;top:234.01px;font-family:'Liberation Mono',monospace;font-size:18.25px;line-height:18.25px;color:#0000a0;letter-spacing:-0.104px;-webkit-text-stroke:0.45px #0000a0;">2823</div>
<div class="a" style="left:51px;top:235px;width:16px;height:13px;background:#dadada;border:1px solid #ababab;border-radius:2px;"></div>
<div class="a t" id="t78" style="left:86.89999999999998px;top:234.01px;font-family:'Liberation Mono',monospace;font-size:18.25px;line-height:18.25px;color:#000080;-webkit-text-stroke-width:0.25px;">    <span style="color:#000080">SchM_Exit_Adc_ADC_EXCLUSIVE_AREA_18</span><span style="color:#a00000">(</span><span style="color:#a00000">)</span><span style="color:#a00000">;</span></div>
<div class="a t" id="t79" style="left:2.5px;top:257.01px;font-family:'Liberation Mono',monospace;font-size:18.25px;line-height:18.25px;color:#0000a0;letter-spacing:-0.104px;-webkit-text-stroke:0.45px #0000a0;">2824</div>
<div class="a t" id="t80" style="left:86.89999999999998px;top:257.01px;font-family:'Liberation Mono',monospace;font-size:18.25px;line-height:18.25px;color:#000080;-webkit-text-stroke-width:0.25px;"></div>
<div class="a t" id="t81" style="left:2.5px;top:280.01px;font-family:'Liberation Mono',monospace;font-size:18.25px;line-height:18.25px;color:#0000a0;letter-spacing:-0.104px;-webkit-text-stroke:0.45px #0000a0;">2825</div>
<div class="a" style="left:51px;top:281px;width:16px;height:13px;background:#dadada;border:1px solid #ababab;border-radius:2px;"></div>
<div class="a t" id="t82" style="left:86.89999999999998px;top:280.01px;font-family:'Liberation Mono',monospace;font-size:18.25px;line-height:18.25px;color:#000080;-webkit-text-stroke-width:0.25px;">    <span style="color:#0055e6">if</span> <span style="color:#a00000">(</span><span style="color:#000080">bBlocking</span><span style="color:#a00000">)</span></div>
<div class="a t" id="t83" style="left:2.5px;top:303.01px;font-family:'Liberation Mono',monospace;font-size:18.25px;line-height:18.25px;color:#0000a0;letter-spacing:-0.104px;-webkit-text-stroke:0.45px #0000a0;">2826</div>
<div class="a t" id="t84" style="left:86.89999999999998px;top:303.01px;font-family:'Liberation Mono',monospace;font-size:18.25px;line-height:18.25px;color:#000080;-webkit-text-stroke-width:0.25px;">    <span style="color:#a00000">{</span></div>
<div class="a t" id="t85" style="left:2.5px;top:326.01px;font-family:'Liberation Mono',monospace;font-size:18.25px;line-height:18.25px;color:#0000a0;letter-spacing:-0.104px;-webkit-text-stroke:0.45px #0000a0;">2827</div>
<div class="a t" id="t86" style="left:86.89999999999998px;top:326.01px;font-family:'Liberation Mono',monospace;font-size:18.25px;line-height:18.25px;color:#000080;-webkit-text-stroke-width:0.25px;">        <span style="color:#2e8b12">/* Wait for the ongoing conversion to stop */</span></div>
<div class="a t" id="t87" style="left:2.5px;top:349.01px;font-family:'Liberation Mono',monospace;font-size:18.25px;line-height:18.25px;color:#0000a0;letter-spacing:-0.104px;-webkit-text-stroke:0.45px #0000a0;">2828</div>
<div class="a" style="left:51px;top:350px;width:16px;height:13px;background:#dadada;border:1px solid #ababab;border-radius:2px;"></div>
<div class="a t" id="t88" style="left:86.89999999999998px;top:349.01px;font-family:'Liberation Mono',monospace;font-size:18.25px;line-height:18.25px;color:#000080;-webkit-text-stroke-width:0.25px;">        <span style="color:#000080">MsrStatus</span> <span style="color:#a00000">=</span> <span style="color:#000080">AdcBasePtr</span><span style="color:#a00000">-</span><span style="color:#a00000">&gt;</span><span style="color:#000080">MSR</span> <span style="color:#a00000">&amp;</span> <span style="color:#000080">ADC_MSR_NSTART_MASK</span><span style="color:#a00000">;</span></div>
</div>
<div class="a" style="left:1101px;top:126px;width:25px;height:366px;background:#f0f0f0;"></div>
<svg style="left:1107.0px;top:134.5px" width="12" height="9" viewBox="0 0 12 9"><path d="M1 7L6 2L11 7" fill="none" stroke="#606060" stroke-width="2.7"/></svg>
<div class="a" style="left:1101px;top:369px;width:24px;height:26px;background:#cdcdcd;"></div>
<svg style="left:1107.0px;top:474.5px" width="12" height="9" viewBox="0 0 12 9"><path d="M1 2L6 7L11 2" fill="none" stroke="#606060" stroke-width="2.7"/></svg>
<div class="a" style="left:246px;top:492px;width:880px;height:26px;background:#f0f0f0;"></div>
<svg style="left:254.5px;top:499.0px" width="9" height="12" viewBox="0 0 9 12"><path d="M7 1L2 6L7 11" fill="none" stroke="#606060" stroke-width="2.7"/></svg>
<div class="a" style="left:272px;top:492px;width:340px;height:25px;background:#cdcdcd;"></div>
<svg style="left:1081.5px;top:499.0px" width="9" height="12" viewBox="0 0 9 12"><path d="M2 1L7 6L2 11" fill="none" stroke="#606060" stroke-width="2.7"/></svg>
<div class="a" style="left:245px;top:525px;width:882px;height:163px;background:#f0f0f0;border:1px solid #b4b4b4;"></div>
<div class="a" style="left:246px;top:526px;width:880px;height:30px;background:#cdd2dd;"></div>
<div class="a" style="left:246px;top:556px;width:880px;height:1px;background:#bdbdbd;"></div>
<div class="a t" id="t89" style="left:251px;top:533.61px;font-family:'Liberation Sans',sans-serif;font-size:17px;line-height:17px;color:#000;letter-spacing:0.067px;">Progress</div>
<svg style="left:1076px;top:535.5px" width="10" height="13" viewBox="0 0 10 13"><path d="M1 5.5L5 1L9 5.5z M1 7.5L5 12L9 7.5z" fill="#000"/></svg>
<svg style="left:1105.5px;top:536.5px" width="10" height="10" viewBox="0 0 10 10"><path d="M0.5 0.5L9.5 9.5M9.5 0.5L0.5 9.5" stroke="#000" stroke-width="1.45"/></svg>
<div class="a" style="left:246px;top:557px;width:843px;height:105px;background:#fff;"></div>
<div class="a" style="left:1114px;top:557px;width:12px;height:130px;background:#e0e0e0;"></div>
<svg style="left:1095.0px;top:567.5px" width="12" height="9" viewBox="0 0 12 9"><path d="M1 7L6 2L11 7" fill="none" stroke="#606060" stroke-width="2.7"/></svg>
<div class="a" style="left:1089px;top:609px;width:24px;height:26px;background:#cdcdcd;"></div>
<svg style="left:1095.0px;top:643.5px" width="12" height="9" viewBox="0 0 12 9"><path d="M1 2L6 7L11 2" fill="none" stroke="#606060" stroke-width="2.7"/></svg>
<svg style="left:254.5px;top:669.0px" width="9" height="12" viewBox="0 0 9 12"><path d="M7 1L2 6L7 11" fill="none" stroke="#606060" stroke-width="2.7"/></svg>
<div class="a" style="left:272px;top:663px;width:26px;height:24px;background:#cdcdcd;"></div>
<svg style="left:1069.5px;top:669.0px" width="9" height="12" viewBox="0 0 9 12"><path d="M2 1L7 6L2 11" fill="none" stroke="#606060" stroke-width="2.7"/></svg>
<div class="a" style="left:113px;top:694px;width:1014px;height:247px;background:#f0f0f0;border:1px solid #b4b4b4;"></div>
<div class="a" style="left:114px;top:695px;width:1012px;height:30px;background:#cdd2dd;"></div>
<div class="a" style="left:114px;top:725px;width:1012px;height:1px;background:#bdbdbd;"></div>
<div class="a t" id="t90" style="left:119px;top:702.61px;font-family:'Liberation Sans',sans-serif;font-size:17px;line-height:17px;color:#000;letter-spacing:0.488px;">Watch</div>
<svg style="left:1075px;top:705px" width="10" height="10" viewBox="0 0 10 10"><path d="M0 0L4 5L0 10z M10 0L6 5L10 10z" fill="#000"/></svg>
<svg style="left:1105.0px;top:705.5px" width="10" height="10" viewBox="0 0 10 10"><path d="M0.5 0.5L9.5 9.5M9.5 0.5L0.5 9.5" stroke="#000" stroke-width="1.45"/></svg>
<svg style="left:127px;top:733px" width="16" height="16" viewBox="0 0 16 16"><path d="M1 1l4 4M5 1l-4 4M3 0v6M0 3h6" stroke="#f5c400"/><circle cx="6" cy="12" r="2.5" fill="none" stroke="#333" stroke-width="1.3"/><circle cx="12" cy="12" r="2.5" fill="none" stroke="#333" stroke-width="1.3"/><path d="M8 12h2" stroke="#333"/><path d="M2 11l2-3" stroke="#b08a30" stroke-width="1.3"/></svg>
<svg style="left:152px;top:733px" width="16" height="16" viewBox="0 0 16 16"><path d="M1 0l5 5M6 0l-5 5" stroke="#e02020" stroke-width="1.5"/><circle cx="6" cy="12" r="2.5" fill="none" stroke="#333" stroke-width="1.3"/><circle cx="12" cy="12" r="2.5" fill="none" stroke="#333" stroke-width="1.3"/><path d="M8 12h2" stroke="#333"/></svg>
<svg style="left:178px;top:733px" width="17" height="16" viewBox="0 0 17 16"><rect x="0.5" y="1.5" width="15" height="13" fill="#cfe0f8" stroke="#3a5aa0"/><rect x="1" y="2" width="14" height="3" fill="#4a78c8"/><path d="M1 8h14M1 11h14M5 5v9M10 5v9" stroke="#3a5aa0"/></svg>
<div class="a" style="left:202px;top:731px;width:1px;height:22px;background:#8c8c8c;"></div>
<svg style="left:210px;top:733px" width="16" height="16" viewBox="0 0 16 16"><circle cx="8" cy="8" r="5.5" fill="none" stroke="#222" stroke-width="1.5"/><path d="M8 5v3l2 2" stroke="#222" stroke-width="1.3" fill="none"/><path d="M0 6l2.5 2 2-3" stroke="#222" fill="none"/></svg>
<div class="a" style="left:232px;top:728px;width:26px;height:25px;background:#cce4f7;border:1px solid #99d1ff;"></div>
<svg style="left:237px;top:733px" width="16" height="16" viewBox="0 0 16 16"><rect x="0.5" y="2.5" width="15" height="12" fill="#eef2ff" stroke="#5a6a95"/><text x="1.5" y="12" font-size="8.5" font-family="Liberation Sans" fill="#2a2aa0">0xF</text></svg>
<svg style="left:263px;top:733px" width="17" height="16" viewBox="0 0 17 16"><rect x="0.5" y="3.5" width="11" height="5" rx="2" fill="#ddd" stroke="#bbb"/><rect x="3.5" y="8.5" width="13" height="5" rx="2" fill="#ddd" stroke="#bbb"/></svg>
<svg style="left:289px;top:733px" width="17" height="16" viewBox="0 0 17 16"><path d="M0.5 7.5h10v8h-10z" fill="#f0f0f0" stroke="#bbb"/><path d="M4 7l5-5 5 3v6" fill="#e8e8e8" stroke="#bbb"/></svg>
<svg style="left:314px;top:733px" width="16" height="16" viewBox="0 0 16 16"><circle cx="4" cy="11" r="3.5" fill="#444"/><circle cx="12" cy="11" r="3.5" fill="#444"/><rect x="2" y="2" width="4" height="7" fill="#444"/><rect x="10" y="2" width="4" height="7" fill="#444"/><rect x="6" y="5" width="4" height="3" fill="#444"/></svg>
<div class="a" style="left:338px;top:731px;width:1px;height:22px;background:#8c8c8c;"></div>
<svg style="left:347px;top:733px" width="16" height="16" viewBox="0 0 16 16"><rect x="1" y="1" width="14" height="14" rx="1" fill="#4b4fc8" stroke="#2a2d80"/><rect x="4" y="2" width="8" height="6" fill="#e8ecf8"/><rect x="5" y="11" width="6" height="4" fill="#d0d4e8"/></svg>
<svg style="left:373px;top:733px" width="16" height="16" viewBox="0 0 16 16"><path d="M0.5 4.5h12v11h-12z" fill="#f0f4ff" stroke="#4a78c8"/><path d="M2 7h5M2 9h8M2 11h5M2 13h8" stroke="#3050c0"/><path d="M11 0l3 3M14 0l-3 3M12.5 -1v5M10 1.5h5" stroke="#f5c400"/></svg>
<svg style="left:400px;top:733px" width="16" height="16" viewBox="0 0 16 16"><path d="M1.5 8.5h13v7h-13z" fill="#eaf0ff" stroke="#4a78c8"/><path d="M3 11h9M3 13h9" stroke="#4a78c8"/><path d="M4 9q1-6 7-6V0l4 4-4 4V5q-4 0-7 4" fill="#2aa02a" stroke="#1a701a" stroke-width="0.5"/></svg>
<svg style="left:425px;top:733px" width="16" height="16" viewBox="0 0 16 16"><path d="M3.5 8.5h12v7h-12z" fill="#eaf0ff" stroke="#4a78c8"/><path d="M5 11h8M5 13h8" stroke="#4a78c8"/><path d="M1 0q7 0 7 7V4l4 4-4 4V9q0-6-7-6" fill="#2aa02a" stroke="#1a701a" stroke-width="0.5"/></svg>
<div class="a t" id="t91" style="left:120px;top:776.61px;font-family:'Liberation Sans',sans-serif;font-size:17px;line-height:17px;color:#000;letter-spacing:-1.286px;">Name</div>
<svg style="left:279px;top:782px" width="10" height="10" viewBox="0 0 10 10"><path d="M0.5 8L4.5 1L8.5 8z" fill="none" stroke="#ccc"/></svg>
<div class="a t" id="t92" style="left:299px;top:776.61px;font-family:'Liberation Sans',sans-serif;font-size:17px;line-height:17px;color:#000;letter-spacing:0.320px;">Value</div>
<div class="a t" id="t93" style="left:380px;top:776.61px;font-family:'Liberation Sans',sans-serif;font-size:17px;line-height:17px;color:#000;letter-spacing:-0.453px;">Type</div>
<div class="a t" id="t94" style="left:459px;top:776.61px;font-family:'Liberation Sans',sans-serif;font-size:17px;line-height:17px;color:#000;letter-spacing:0.188px;">Address</div>
<div class="a t" id="t95" style="left:600px;top:776.61px;font-family:'Liberation Sans',sans-serif;font-size:17px;line-height:17px;color:#000;letter-spacing:0.930px;">Error</div>
<div class="a" style="left:114px;top:795px;width:987px;height:145px;background:#fff;"></div>
<div class="a" style="left:114px;top:818px;width:987px;height:1px;background:#e6e6e6;"></div>
<div class="a" style="left:114px;top:842px;width:987px;height:1px;background:#e6e6e6;"></div>
<div class="a" style="left:114px;top:866px;width:987px;height:1px;background:#e6e6e6;"></div>
<div class="a" style="left:114px;top:890px;width:987px;height:1px;background:#e6e6e6;"></div>
<div class="a" style="left:114px;top:914px;width:987px;height:1px;background:#e6e6e6;"></div>
<div class="a" style="left:114px;top:938px;width:987px;height:1px;background:#e6e6e6;"></div>
<div class="a" style="left:293px;top:795px;width:1px;height:145px;background:#e6e6e6;"></div>
<div class="a" style="left:373px;top:795px;width:1px;height:145px;background:#e6e6e6;"></div>
<div class="a" style="left:453px;top:795px;width:1px;height:145px;background:#e6e6e6;"></div>
<div class="a" style="left:593px;top:795px;width:1px;height:145px;background:#e6e6e6;"></div>
<div class="a" style="left:114px;top:795px;width:179px;height:145px;overflow:hidden;">
<div class="a t" id="t96" style="left:21.5px;top:3.05px;font-family:'Liberation Mono',monospace;font-size:18.2px;line-height:18.2px;color:#000;-webkit-text-stroke-width:0.25px;">coreId</div>
<div class="a t" id="t97" style="left:21.5px;top:27.05px;font-family:'Liberation Mono',monospace;font-size:18.2px;line-height:18.2px;color:#000;-webkit-text-stroke-width:0.25px;">MSCM_IRSPRC_COUNT</div>
<div class="a t" id="t98" style="left:21.5px;top:51.05px;font-family:'Liberation Mono',monospace;font-size:18.2px;line-height:18.2px;color:#000;-webkit-text-stroke-width:0.25px;">BSWM_E_NO_PREINIT</div>
<div class="a t" id="t99" style="left:21.5px;top:75.05px;font-family:'Liberation Mono',monospace;font-size:18.2px;line-height:18.2px;color:#000;-webkit-text-stroke-width:0.25px;">partitionIdx</div>
<div class="a t" id="t100" style="left:21.5px;top:99.05px;font-family:'Liberation Mono',monospace;font-size:18.2px;line-height:18.2px;color:#000;-webkit-text-stroke-width:0.25px;">partitionIdx</div>
<div class="a t" id="t101" style="left:21.5px;top:123.05px;font-family:'Liberation Mono',monospace;font-size:18.2px;line-height:18.2px;color:#000;-webkit-text-stroke-width:0.25px;">copy_layout</div>
</div>
<div class="a" style="left:594px;top:795px;width:507px;height:145px;overflow:hidden;">
<div class="a t" id="t102" style="left:13px;top:3.05px;font-family:'Liberation Mono',monospace;font-size:18.2px;line-height:18.2px;color:#000;-webkit-text-stroke-width:0.25px;">Unknown identifier: coreId</div>
<div class="a t" id="t103" style="left:13px;top:27.05px;font-family:'Liberation Mono',monospace;font-size:18.2px;line-height:18.2px;color:#000;-webkit-text-stroke-width:0.25px;">Unknown identifier: MSCM_IRSPRC_COUNT</div>
<div class="a t" id="t104" style="left:13px;top:51.05px;font-family:'Liberation Mono',monospace;font-size:18.2px;line-height:18.2px;color:#000;-webkit-text-stroke-width:0.25px;">Unknown identifier: BSWM_E_NO_PREINIT</div>
<div class="a t" id="t105" style="left:13px;top:75.05px;font-family:'Liberation Mono',monospace;font-size:18.2px;line-height:18.2px;color:#000;-webkit-text-stroke-width:0.25px;">Unknown identifier: partitionIdx</div>
<div class="a t" id="t106" style="left:13px;top:99.05px;font-family:'Liberation Mono',monospace;font-size:18.2px;line-height:18.2px;color:#000;-webkit-text-stroke-width:0.25px;">Unknown identifier: partitionIdx</div>
<div class="a t" id="t107" style="left:13px;top:123.05px;font-family:'Liberation Mono',monospace;font-size:18.2px;line-height:18.2px;color:#000;-webkit-text-stroke-width:0.25px;">Unknown identifier: copy_layout</div>
</div>
<div class="a" style="left:1101px;top:795px;width:25px;height:145px;background:#f0f0f0;"></div>
<svg style="left:1107.0px;top:803.5px" width="12" height="9" viewBox="0 0 12 9"><path d="M1 7L6 2L11 7" fill="none" stroke="#606060" stroke-width="2.7"/></svg>
<div class="a" style="left:1101px;top:819px;width:24px;height:26px;background:#cdcdcd;"></div>
<svg style="left:1107.0px;top:923.5px" width="12" height="9" viewBox="0 0 12 9"><path d="M1 2L6 7L11 2" fill="none" stroke="#606060" stroke-width="2.7"/></svg>
<div class="a" style="left:1133px;top:94px;width:788px;height:151px;background:#f0f0f0;border:1px solid #b4b4b4;"></div>
<div class="a" style="left:1134px;top:95px;width:786px;height:30px;background:#cdd2dd;"></div>
<div class="a" style="left:1134px;top:125px;width:786px;height:1px;background:#bdbdbd;"></div>
<div class="a t" id="t108" style="left:1139px;top:102.61px;font-family:'Liberation Sans',sans-serif;font-size:17px;line-height:17px;color:#000;letter-spacing:0.314px;">Disassembly</div>
<svg style="left:1870px;top:104.5px" width="10" height="13" viewBox="0 0 10 13"><path d="M1 5.5L5 1L9 5.5z M1 7.5L5 12L9 7.5z" fill="#000"/></svg>
<svg style="left:1899.5px;top:105.5px" width="10" height="10" viewBox="0 0 10 10"><path d="M0.5 0.5L9.5 9.5M9.5 0.5L0.5 9.5" stroke="#000" stroke-width="1.45"/></svg>
<svg style="left:1145px;top:133px" width="16" height="16" viewBox="0 0 16 16"><rect x="1" y="1" width="14" height="14" rx="1" fill="#4b4fc8" stroke="#2a2d80"/><rect x="4" y="2" width="8" height="6" fill="#e8ecf8"/><rect x="5" y="11" width="6" height="4" fill="#d0d4e8"/></svg>
<div class="a" style="left:1169px;top:130px;width:1px;height:22px;background:#8c8c8c;"></div>
<svg style="left:1178px;top:133px" width="16" height="16" viewBox="0 0 16 16"><path d="M1.5 6.5h6v-4l6 5.5-6 5.5v-4h-6z" fill="#fafafa" stroke="#aaa"/></svg>
<div class="a" style="left:1201px;top:130px;width:1px;height:22px;background:#8c8c8c;"></div>
<svg style="left:1209px;top:133px" width="16" height="16" viewBox="0 0 16 16"><path d="M14.5 6.5h-7v-4l-6 5.5 6 5.5v-4h7z" fill="#4aa02a" stroke="#2a7a1a" stroke-width="0.7"/></svg>
<svg style="left:1234px;top:133px" width="16" height="16" viewBox="0 0 16 16"><path d="M1.5 6.5h7v-4l6 5.5-6 5.5v-4h-7z" fill="#ddd" stroke="#bbb" stroke-width="0.7"/></svg>
<svg style="left:1260px;top:133px" width="16" height="16" viewBox="0 0 16 16"><path d="M6.5 15.5v-8h-4l5.5-6 5.5 6h-4v8z" fill="#4aa02a" stroke="#2a7a1a" stroke-width="0.7"/></svg>
<svg style="left:1286px;top:133px" width="16" height="16" viewBox="0 0 16 16"><path d="M6.5 0.5v8h-4l5.5 6 5.5-6h-4v-8z" fill="#4aa02a" stroke="#2a7a1a" stroke-width="0.7"/></svg>
<div class="a" style="left:1411px;top:134px;width:326px;height:30px;background:#f0f0f0;border:1px solid #7a7a7a;"></div>
<div class="a t" id="t109" style="left:1414px;top:141.46px;font-family:'Liberation Sans',sans-serif;font-size:16px;line-height:16px;color:#000;letter-spacing:0.009px;">Adc_Sar_Ip_AbortChain + 0x2E</div>
<div class="a" style="left:1738px;top:135px;width:30px;height:28px;background:#e1e1e1;border:1px solid #adadad;"></div>
<div class="a t" id="t110" style="left:1746px;top:144.00px;font-family:'Liberation Sans',sans-serif;font-size:13px;line-height:13px;color:#000;">...</div>
<div class="a t" id="t111" style="left:1139px;top:176.61px;font-family:'Liberation Sans',sans-serif;font-size:17px;line-height:17px;color:#000;letter-spacing:-0.312px;">Address</div>
<svg style="left:1311px;top:182px" width="10" height="10" viewBox="0 0 10 10"><path d="M0.5 8L4.5 1L8.5 8z" fill="none" stroke="#ccc"/></svg>
<div class="a t" id="t112" style="left:1331px;top:176.61px;font-family:'Liberation Sans',sans-serif;font-size:17px;line-height:17px;color:#000;letter-spacing:0.193px;">Data</div>
<div class="a t" id="t113" style="left:1498px;top:176.61px;font-family:'Liberation Sans',sans-serif;font-size:17px;line-height:17px;color:#000;letter-spacing:-0.386px;">Disassembly</div>
<div class="a" style="left:1134px;top:194px;width:762px;height:50px;background:#fff;"></div>
<div class="a" style="left:1325px;top:194px;width:1px;height:50px;background:#e6e6e6;"></div>
<div class="a" style="left:1492px;top:194px;width:1px;height:50px;background:#e6e6e6;"></div>
<svg style="left:1136px;top:195px" width="20" height="20" viewBox="0 0 20 20"><circle cx="10" cy="10" r="10" fill="#7a0000"/></svg>
<svg style="left:1135px;top:220px" width="22" height="22" viewBox="0 0 22 22"><path d="M0.5 5.5h10v-5l10 10-10 10v-5h-10z" fill="#dcdcdc" stroke="#000" stroke-width="1"/></svg>
<div class="a t" id="t114" style="left:1160px;top:221.05px;font-family:'Liberation Mono',monospace;font-size:18.2px;line-height:18.2px;color:#000;-webkit-text-stroke-width:0.25px;">0040&#x27;4054</div>
<div class="a t" id="t115" style="left:1329px;top:221.05px;font-family:'Liberation Mono',monospace;font-size:18.2px;line-height:18.2px;color:#800080;-webkit-text-stroke-width:0.25px;">3868</div>
<div class="a" style="left:1493px;top:194px;width:403px;height:50px;overflow:hidden;">
<div class="a t" id="t116" style="left:2px;top:3.05px;font-family:'Liberation Mono',monospace;font-size:18.2px;line-height:18.2px;color:#9a8a00;-webkit-text-stroke-width:0.25px;">AdcBasePtr-&gt;MCR &amp;= ~(ADC_MCR_NSTART(1U));</div>
<div class="a t" id="t117" style="left:3px;top:27.05px;font-family:'Liberation Mono',monospace;font-size:18.2px;line-height:18.2px;color:#000;-webkit-text-stroke-width:0.25px;">ldr         r0,[r7,#0x00]</div>
</div>
<div class="a" style="left:1896px;top:194px;width:24px;height:50px;background:#f0f0f0;"></div>
<svg style="left:1902.0px;top:201.5px" width="12" height="9" viewBox="0 0 12 9"><path d="M1 7L6 2L11 7" fill="none" stroke="#505050" stroke-width="2.7"/></svg>
<svg style="left:1902.0px;top:226.5px" width="12" height="9" viewBox="0 0 12 9"><path d="M1 2L6 7L11 2" fill="none" stroke="#505050" stroke-width="2.7"/></svg>
<div class="a" style="left:1133px;top:251px;width:788px;height:690px;background:#f0f0f0;border:1px solid #b4b4b4;"></div>
<div class="a" style="left:1134px;top:252px;width:786px;height:30px;background:#4a90d9;"></div>
<div class="a" style="left:1134px;top:282px;width:786px;height:1px;background:#bdbdbd;"></div>
<div class="a t" id="t118" style="left:1139px;top:259.61px;font-family:'Liberation Sans',sans-serif;font-size:17px;line-height:17px;color:#fff;letter-spacing:-1.333px;">SFRs</div>
<svg style="left:1870px;top:261.5px" width="10" height="13" viewBox="0 0 10 13"><path d="M1 5.5L5 1L9 5.5z M1 7.5L5 12L9 7.5z" fill="#fff"/></svg>
<svg style="left:1899.5px;top:262.5px" width="10" height="10" viewBox="0 0 10 10"><path d="M0.5 0.5L9.5 9.5M9.5 0.5L0.5 9.5" stroke="#fff" stroke-width="1.45"/></svg>
<div class="a t" id="t119" style="left:1139px;top:284.61px;font-family:'Liberation Sans',sans-serif;font-size:17px;line-height:17px;color:#000;letter-spacing:-0.620px;">Name</div>
<svg style="left:1402px;top:290px" width="10" height="10" viewBox="0 0 10 10"><path d="M0.5 8L4.5 1L8.5 8z" fill="none" stroke="#ccc"/></svg>
<div class="a t" id="t120" style="left:1422px;top:284.61px;font-family:'Liberation Sans',sans-serif;font-size:17px;line-height:17px;color:#000;letter-spacing:0.570px;">Value</div>
<div class="a t" id="t121" style="left:1625px;top:284.61px;font-family:'Liberation Sans',sans-serif;font-size:17px;line-height:17px;color:#000;letter-spacing:0.147px;">SubValue</div>
<div class="a" style="left:1134px;top:302px;width:761px;height:45px;background:#fff;"></div>
<svg style="left:1140.0px;top:320.5px" width="8" height="8" viewBox="0 0 8 8"><path d="M0.5 0.5L7.5 7.5M7.5 0.5L0.5 7.5" stroke="#000" stroke-width="1.45"/></svg>
<div class="a" style="left:1156px;top:305px;width:736px;height:33px;background:#fff;border:1px solid #7a7a7a;"></div>
<svg style="left:1872.0px;top:317.5px" width="12" height="9" viewBox="0 0 12 9"><path d="M1 2L6 7L11 2" fill="none" stroke="#555" stroke-width="2.7"/></svg>
<div class="a" style="left:1134px;top:347px;width:761px;height:1px;background:#c8c8c8;"></div>
<div class="a" style="left:1134px;top:348px;width:761px;height:568px;overflow:hidden;background:#fff;">
<div class="a" style="left:0px;top:0px;width:761px;height:24px;background:#f7f7f7;"></div>
<div class="a" style="left:0px;top:48px;width:761px;height:24px;background:#f7f7f7;"></div>
<div class="a" style="left:0px;top:96px;width:761px;height:24px;background:#f7f7f7;"></div>
<div class="a" style="left:0px;top:120px;width:761px;height:24px;background:#c4c4dc;"></div>
<div class="a" style="left:0px;top:144px;width:761px;height:46px;background:#f7f7f7;"></div>
<div class="a" style="left:0px;top:236px;width:761px;height:46px;background:#f7f7f7;"></div>
<div class="a" style="left:0px;top:328px;width:761px;height:46px;background:#f7f7f7;"></div>
<div class="a" style="left:0px;top:420px;width:761px;height:46px;background:#f7f7f7;"></div>
<div class="a" style="left:0px;top:512px;width:761px;height:46px;background:#f7f7f7;"></div>
<div class="a" style="left:24px;top:0px;width:1px;height:568px;border-left:1px dotted #999;"></div>
<div class="a" style="left:40px;top:144px;width:1px;height:424px;border-left:1px dotted #999;"></div>
<svg style="left:19.5px;top:7px" width="10" height="10" viewBox="0 0 10 10"><rect x="0.5" y="0.5" width="9" height="9" fill="#fff" stroke="#999"/><path d="M2 5h6" stroke="#000" stroke-width="1.2"/><path d="M5 2v6" stroke="#000" stroke-width="1.2"/></svg>
<div class="a" style="left:30px;top:12px;width:1px;height:1px;border-left:1px dotted #999;"></div>
<div class="a" style="left:30px;top:12px;width:6px;height:1px;border-top:1px dotted #999;"></div>
<svg style="left:38px;top:5px" width="15" height="13" viewBox="0 0 15 13"><rect x="-4" y="-2.5" width="8" height="5" rx="1" transform="translate(5 5) rotate(45)" fill="#f0e060" stroke="#333" stroke-width="1"/><rect x="-4" y="-2.5" width="8" height="5" rx="1" transform="translate(8.5 6.5) rotate(45)" fill="#f0e060" stroke="#333" stroke-width="1"/></svg>
<div class="a t" id="t122" style="left:56px;top:4.96px;font-family:'Liberation Sans',sans-serif;font-size:16px;line-height:16px;color:#000;letter-spacing:-0.143px;">EMIOS_0</div>
<svg style="left:19.5px;top:31px" width="10" height="10" viewBox="0 0 10 10"><rect x="0.5" y="0.5" width="9" height="9" fill="#fff" stroke="#999"/><path d="M2 5h6" stroke="#000" stroke-width="1.2"/><path d="M5 2v6" stroke="#000" stroke-width="1.2"/></svg>
<div class="a" style="left:30px;top:36px;width:1px;height:1px;border-left:1px dotted #999;"></div>
<div class="a" style="left:30px;top:36px;width:6px;height:1px;border-top:1px dotted #999;"></div>
<svg style="left:38px;top:29px" width="15" height="13" viewBox="0 0 15 13"><rect x="-4" y="-2.5" width="8" height="5" rx="1" transform="translate(5 5) rotate(45)" fill="#f0e060" stroke="#333" stroke-width="1"/><rect x="-4" y="-2.5" width="8" height="5" rx="1" transform="translate(8.5 6.5) rotate(45)" fill="#f0e060" stroke="#333" stroke-width="1"/></svg>
<div class="a t" id="t123" style="left:56px;top:28.96px;font-family:'Liberation Sans',sans-serif;font-size:16px;line-height:16px;color:#000;letter-spacing:-0.143px;">EMIOS_1</div>
<svg style="left:19.5px;top:55px" width="10" height="10" viewBox="0 0 10 10"><rect x="0.5" y="0.5" width="9" height="9" fill="#fff" stroke="#999"/><path d="M2 5h6" stroke="#000" stroke-width="1.2"/><path d="M5 2v6" stroke="#000" stroke-width="1.2"/></svg>
<div class="a" style="left:30px;top:60px;width:1px;height:1px;border-left:1px dotted #999;"></div>
<div class="a" style="left:30px;top:60px;width:6px;height:1px;border-top:1px dotted #999;"></div>
<svg style="left:38px;top:53px" width="15" height="13" viewBox="0 0 15 13"><rect x="-4" y="-2.5" width="8" height="5" rx="1" transform="translate(5 5) rotate(45)" fill="#f0e060" stroke="#333" stroke-width="1"/><rect x="-4" y="-2.5" width="8" height="5" rx="1" transform="translate(8.5 6.5) rotate(45)" fill="#f0e060" stroke="#333" stroke-width="1"/></svg>
<div class="a t" id="t124" style="left:56px;top:52.96px;font-family:'Liberation Sans',sans-serif;font-size:16px;line-height:16px;color:#000;letter-spacing:-0.143px;">EMIOS_2</div>
<svg style="left:19.5px;top:79px" width="10" height="10" viewBox="0 0 10 10"><rect x="0.5" y="0.5" width="9" height="9" fill="#fff" stroke="#999"/><path d="M2 5h6" stroke="#000" stroke-width="1.2"/><path d="M5 2v6" stroke="#000" stroke-width="1.2"/></svg>
<div class="a" style="left:30px;top:84px;width:1px;height:1px;border-left:1px dotted #999;"></div>
<div class="a" style="left:30px;top:84px;width:6px;height:1px;border-top:1px dotted #999;"></div>
<svg style="left:38px;top:77px" width="15" height="13" viewBox="0 0 15 13"><rect x="-4" y="-2.5" width="8" height="5" rx="1" transform="translate(5 5) rotate(45)" fill="#f0e060" stroke="#333" stroke-width="1"/><rect x="-4" y="-2.5" width="8" height="5" rx="1" transform="translate(8.5 6.5) rotate(45)" fill="#f0e060" stroke="#333" stroke-width="1"/></svg>
<div class="a t" id="t125" style="left:56px;top:76.96px;font-family:'Liberation Sans',sans-serif;font-size:16px;line-height:16px;color:#000;letter-spacing:0.922px;">LCU_0</div>
<svg style="left:19.5px;top:103px" width="10" height="10" viewBox="0 0 10 10"><rect x="0.5" y="0.5" width="9" height="9" fill="#fff" stroke="#999"/><path d="M2 5h6" stroke="#000" stroke-width="1.2"/><path d="M5 2v6" stroke="#000" stroke-width="1.2"/></svg>
<div class="a" style="left:30px;top:108px;width:1px;height:1px;border-left:1px dotted #999;"></div>
<div class="a" style="left:30px;top:108px;width:6px;height:1px;border-top:1px dotted #999;"></div>
<svg style="left:38px;top:101px" width="15" height="13" viewBox="0 0 15 13"><rect x="-4" y="-2.5" width="8" height="5" rx="1" transform="translate(5 5) rotate(45)" fill="#f0e060" stroke="#333" stroke-width="1"/><rect x="-4" y="-2.5" width="8" height="5" rx="1" transform="translate(8.5 6.5) rotate(45)" fill="#f0e060" stroke="#333" stroke-width="1"/></svg>
<div class="a t" id="t126" style="left:56px;top:100.96px;font-family:'Liberation Sans',sans-serif;font-size:16px;line-height:16px;color:#000;letter-spacing:0.922px;">LCU_1</div>
<svg style="left:19.5px;top:127px" width="10" height="10" viewBox="0 0 10 10"><rect x="0.5" y="0.5" width="9" height="9" fill="#fff" stroke="#999"/><path d="M2 5h6" stroke="#000" stroke-width="1.2"/></svg>
<div class="a" style="left:30px;top:132px;width:1px;height:1px;border-left:1px dotted #999;"></div>
<div class="a" style="left:30px;top:132px;width:6px;height:1px;border-top:1px dotted #999;"></div>
<svg style="left:38px;top:125px" width="15" height="13" viewBox="0 0 15 13"><rect x="-4" y="-2.5" width="8" height="5" rx="1" transform="translate(5 5) rotate(45)" fill="#f0e060" stroke="#333" stroke-width="1"/><rect x="-4" y="-2.5" width="8" height="5" rx="1" transform="translate(8.5 6.5) rotate(45)" fill="#f0e060" stroke="#333" stroke-width="1"/></svg>
<div class="a" style="left:54px;top:120px;width:53px;height:24px;background:#0073d9;border:1px dotted #000;outline:1px dotted #ff9a00;outline-offset:-1px;"></div>
<div class="a t" id="t127" style="left:56px;top:124.96px;font-family:'Liberation Sans',sans-serif;font-size:16px;line-height:16px;color:#fff;letter-spacing:-1.020px;">ADC_0</div>
<svg style="left:35.5px;top:162px" width="10" height="10" viewBox="0 0 10 10"><rect x="0.5" y="0.5" width="9" height="9" fill="#fff" stroke="#999"/><path d="M2 5h6" stroke="#000" stroke-width="1.2"/><path d="M5 2v6" stroke="#000" stroke-width="1.2"/></svg>
<div class="a" style="left:46px;top:167px;width:6px;height:1px;border-top:1px dotted #999;"></div>
<svg style="left:55px;top:163px" width="10" height="10" viewBox="0 0 10 10"><rect x="-3.8" y="-2.6" width="7.6" height="5.2" transform="translate(5 5) rotate(45)" fill="#f0e878" stroke="#333" stroke-width="1.1"/></svg>
<div class="a t" id="t128" style="left:72px;top:159.96px;font-family:'Liberation Sans',sans-serif;font-size:16px;line-height:16px;color:#000;letter-spacing:-1.223px;">MCR</div>
<div class="a t" id="t129" style="left:285px;top:160.46px;font-family:'Liberation Sans',sans-serif;font-size:16px;line-height:16px;color:#000;letter-spacing:-0.060px;">Can not access</div>
<div class="a t" id="t130" style="left:486px;top:148.96px;font-family:'Liberation Sans',sans-serif;font-size:16px;line-height:16px;color:#000;letter-spacing:-1.264px;">PWDN</div>
<div class="a t" id="t131" style="left:486px;top:171.46px;font-family:'Liberation Sans',sans-serif;font-size:16px;line-height:16px;color:#000;letter-spacing:0.057px;">skipped</div>
<div class="a t" id="t132" style="left:566px;top:148.96px;font-family:'Liberation Sans',sans-serif;font-size:16px;line-height:16px;color:#000;letter-spacing:-0.938px;">ADCLKSEL</div>
<div class="a t" id="t133" style="left:566px;top:171.46px;font-family:'Liberation Sans',sans-serif;font-size:16px;line-height:16px;color:#000;letter-spacing:0.057px;">skipped</div>
<div class="a t" id="t134" style="left:686px;top:148.96px;font-family:'Liberation Sans',sans-serif;font-size:16px;line-height:16px;color:#000;letter-spacing:-1.169px;">ACKO</div>
<div class="a t" id="t135" style="left:686px;top:171.46px;font-family:'Liberation Sans',sans-serif;font-size:16px;line-height:16px;color:#000;letter-spacing:0.057px;">skipped</div>
<svg style="left:35.5px;top:208px" width="10" height="10" viewBox="0 0 10 10"><rect x="0.5" y="0.5" width="9" height="9" fill="#fff" stroke="#999"/><path d="M2 5h6" stroke="#000" stroke-width="1.2"/><path d="M5 2v6" stroke="#000" stroke-width="1.2"/></svg>
<div class="a" style="left:46px;top:213px;width:6px;height:1px;border-top:1px dotted #999;"></div>
<svg style="left:55px;top:209px" width="10" height="10" viewBox="0 0 10 10"><rect x="-3.8" y="-2.6" width="7.6" height="5.2" transform="translate(5 5) rotate(45)" fill="#f0e878" stroke="#333" stroke-width="1.1"/></svg>
<div class="a t" id="t136" style="left:72px;top:205.96px;font-family:'Liberation Sans',sans-serif;font-size:16px;line-height:16px;color:#000;letter-spacing:-1.192px;">MSR</div>
<div class="a t" id="t137" style="left:285px;top:206.46px;font-family:'Liberation Sans',sans-serif;font-size:16px;line-height:16px;color:#000;letter-spacing:0.057px;">skipped</div>
<div class="a t" id="t138" style="left:486px;top:194.96px;font-family:'Liberation Sans',sans-serif;font-size:16px;line-height:16px;color:#000;letter-spacing:-0.930px;">ADCSTATUS</div>
<div class="a t" id="t139" style="left:486px;top:217.46px;font-family:'Liberation Sans',sans-serif;font-size:16px;line-height:16px;color:#000;letter-spacing:0.057px;">skipped</div>
<div class="a t" id="t140" style="left:606px;top:194.96px;font-family:'Liberation Sans',sans-serif;font-size:16px;line-height:16px;color:#000;letter-spacing:-1.169px;">ACKO</div>
<div class="a t" id="t141" style="left:606px;top:217.46px;font-family:'Liberation Sans',sans-serif;font-size:16px;line-height:16px;color:#000;letter-spacing:0.057px;">skipped</div>
<div class="a t" id="t142" style="left:686px;top:194.96px;font-family:'Liberation Sans',sans-serif;font-size:16px;line-height:16px;color:#000;letter-spacing:-1.071px;">CHADDR</div>
<div class="a t" id="t143" style="left:686px;top:217.46px;font-family:'Liberation Sans',sans-serif;font-size:16px;line-height:16px;color:#000;letter-spacing:0.057px;">skipped</div>
<svg style="left:35.5px;top:254px" width="10" height="10" viewBox="0 0 10 10"><rect x="0.5" y="0.5" width="9" height="9" fill="#fff" stroke="#999"/><path d="M2 5h6" stroke="#000" stroke-width="1.2"/><path d="M5 2v6" stroke="#000" stroke-width="1.2"/></svg>
<div class="a" style="left:46px;top:259px;width:6px;height:1px;border-top:1px dotted #999;"></div>
<svg style="left:55px;top:255px" width="10" height="10" viewBox="0 0 10 10"><rect x="-3.8" y="-2.6" width="7.6" height="5.2" transform="translate(5 5) rotate(45)" fill="#f0e878" stroke="#333" stroke-width="1.1"/></svg>
<div class="a t" id="t144" style="left:72px;top:251.96px;font-family:'Liberation Sans',sans-serif;font-size:16px;line-height:16px;color:#000;letter-spacing:-0.881px;">ISR</div>
<div class="a t" id="t145" style="left:285px;top:252.46px;font-family:'Liberation Sans',sans-serif;font-size:16px;line-height:16px;color:#000;letter-spacing:0.057px;">skipped</div>
<div class="a t" id="t146" style="left:486px;top:240.96px;font-family:'Liberation Sans',sans-serif;font-size:16px;line-height:16px;color:#000;letter-spacing:-1.291px;">ECH</div>
<div class="a t" id="t147" style="left:486px;top:263.46px;font-family:'Liberation Sans',sans-serif;font-size:16px;line-height:16px;color:#000;letter-spacing:0.057px;">skipped</div>
<div class="a t" id="t148" style="left:566px;top:240.96px;font-family:'Liberation Sans',sans-serif;font-size:16px;line-height:16px;color:#000;letter-spacing:-1.327px;">EOC</div>
<div class="a t" id="t149" style="left:566px;top:263.46px;font-family:'Liberation Sans',sans-serif;font-size:16px;line-height:16px;color:#000;letter-spacing:0.057px;">skipped</div>
<div class="a t" id="t150" style="left:646px;top:240.96px;font-family:'Liberation Sans',sans-serif;font-size:16px;line-height:16px;color:#000;letter-spacing:-1.074px;">JECH</div>
<div class="a t" id="t151" style="left:646px;top:263.46px;font-family:'Liberation Sans',sans-serif;font-size:16px;line-height:16px;color:#000;letter-spacing:0.057px;">skipped</div>
<div class="a t" id="t152" style="left:726px;top:240.96px;font-family:'Liberation Sans',sans-serif;font-size:16px;line-height:16px;color:#000;letter-spacing:-1.098px;">JEOC</div>
<div class="a t" id="t153" style="left:726px;top:263.46px;font-family:'Liberation Sans',sans-serif;font-size:16px;line-height:16px;color:#000;letter-spacing:0.057px;">skipped</div>
<svg style="left:35.5px;top:300px" width="10" height="10" viewBox="0 0 10 10"><rect x="0.5" y="0.5" width="9" height="9" fill="#fff" stroke="#999"/><path d="M2 5h6" stroke="#000" stroke-width="1.2"/><path d="M5 2v6" stroke="#000" stroke-width="1.2"/></svg>
<div class="a" style="left:46px;top:305px;width:6px;height:1px;border-top:1px dotted #999;"></div>
<svg style="left:55px;top:301px" width="10" height="10" viewBox="0 0 10 10"><rect x="-3.8" y="-2.6" width="7.6" height="5.2" transform="translate(5 5) rotate(45)" fill="#f0e878" stroke="#333" stroke-width="1.1"/></svg>
<div class="a t" id="t154" style="left:72px;top:297.96px;font-family:'Liberation Sans',sans-serif;font-size:16px;line-height:16px;color:#000;letter-spacing:-0.874px;">CEOCFR0</div>
<div class="a t" id="t155" style="left:285px;top:298.46px;font-family:'Liberation Sans',sans-serif;font-size:16px;line-height:16px;color:#000;letter-spacing:0.057px;">skipped</div>
<div class="a t" id="t156" style="left:486px;top:286.96px;font-family:'Liberation Sans',sans-serif;font-size:16px;line-height:16px;color:#000;letter-spacing:-0.893px;">PIEOCF0</div>
<div class="a t" id="t157" style="left:486px;top:309.46px;font-family:'Liberation Sans',sans-serif;font-size:16px;line-height:16px;color:#000;letter-spacing:0.057px;">skipped</div>
<div class="a t" id="t158" style="left:566px;top:286.96px;font-family:'Liberation Sans',sans-serif;font-size:16px;line-height:16px;color:#000;letter-spacing:-0.893px;">PIEOCF1</div>
<div class="a t" id="t159" style="left:566px;top:309.46px;font-family:'Liberation Sans',sans-serif;font-size:16px;line-height:16px;color:#000;letter-spacing:0.057px;">skipped</div>
<div class="a t" id="t160" style="left:646px;top:286.96px;font-family:'Liberation Sans',sans-serif;font-size:16px;line-height:16px;color:#000;letter-spacing:-0.893px;">PIEOCF2</div>
<div class="a t" id="t161" style="left:646px;top:309.46px;font-family:'Liberation Sans',sans-serif;font-size:16px;line-height:16px;color:#000;letter-spacing:0.057px;">skipped</div>
<div class="a t" id="t162" style="left:726px;top:286.96px;font-family:'Liberation Sans',sans-serif;font-size:16px;line-height:16px;color:#000;letter-spacing:-0.893px;">PIEOCF3</div>
<div class="a t" id="t163" style="left:726px;top:309.46px;font-family:'Liberation Sans',sans-serif;font-size:16px;line-height:16px;color:#000;letter-spacing:0.057px;">skipped</div>
<svg style="left:35.5px;top:346px" width="10" height="10" viewBox="0 0 10 10"><rect x="0.5" y="0.5" width="9" height="9" fill="#fff" stroke="#999"/><path d="M2 5h6" stroke="#000" stroke-width="1.2"/><path d="M5 2v6" stroke="#000" stroke-width="1.2"/></svg>
<div class="a" style="left:46px;top:351px;width:6px;height:1px;border-top:1px dotted #999;"></div>
<svg style="left:55px;top:347px" width="10" height="10" viewBox="0 0 10 10"><rect x="-3.8" y="-2.6" width="7.6" height="5.2" transform="translate(5 5) rotate(45)" fill="#f0e878" stroke="#333" stroke-width="1.1"/></svg>
<div class="a t" id="t164" style="left:72px;top:343.96px;font-family:'Liberation Sans',sans-serif;font-size:16px;line-height:16px;color:#000;letter-spacing:-0.874px;">CEOCFR1</div>
<div class="a t" id="t165" style="left:285px;top:344.46px;font-family:'Liberation Sans',sans-serif;font-size:16px;line-height:16px;color:#000;letter-spacing:0.057px;">skipped</div>
<div class="a t" id="t166" style="left:486px;top:332.96px;font-family:'Liberation Sans',sans-serif;font-size:16px;line-height:16px;color:#000;letter-spacing:-0.893px;">SIEOCF0</div>
<div class="a t" id="t167" style="left:486px;top:355.46px;font-family:'Liberation Sans',sans-serif;font-size:16px;line-height:16px;color:#000;letter-spacing:0.057px;">skipped</div>
<div class="a t" id="t168" style="left:566px;top:332.96px;font-family:'Liberation Sans',sans-serif;font-size:16px;line-height:16px;color:#000;letter-spacing:-0.893px;">SIEOCF1</div>
<div class="a t" id="t169" style="left:566px;top:355.46px;font-family:'Liberation Sans',sans-serif;font-size:16px;line-height:16px;color:#000;letter-spacing:0.057px;">skipped</div>
<div class="a t" id="t170" style="left:646px;top:332.96px;font-family:'Liberation Sans',sans-serif;font-size:16px;line-height:16px;color:#000;letter-spacing:-0.893px;">SIEOCF2</div>
<div class="a t" id="t171" style="left:646px;top:355.46px;font-family:'Liberation Sans',sans-serif;font-size:16px;line-height:16px;color:#000;letter-spacing:0.057px;">skipped</div>
<div class="a t" id="t172" style="left:726px;top:332.96px;font-family:'Liberation Sans',sans-serif;font-size:16px;line-height:16px;color:#000;letter-spacing:-0.893px;">SIEOCF3</div>
<div class="a t" id="t173" style="left:726px;top:355.46px;font-family:'Liberation Sans',sans-serif;font-size:16px;line-height:16px;color:#000;letter-spacing:0.057px;">skipped</div>
<svg style="left:35.5px;top:392px" width="10" height="10" viewBox="0 0 10 10"><rect x="0.5" y="0.5" width="9" height="9" fill="#fff" stroke="#999"/><path d="M2 5h6" stroke="#000" stroke-width="1.2"/><path d="M5 2v6" stroke="#000" stroke-width="1.2"/></svg>
<div class="a" style="left:46px;top:397px;width:6px;height:1px;border-top:1px dotted #999;"></div>
<svg style="left:55px;top:393px" width="10" height="10" viewBox="0 0 10 10"><rect x="-3.8" y="-2.6" width="7.6" height="5.2" transform="translate(5 5) rotate(45)" fill="#f0e878" stroke="#333" stroke-width="1.1"/></svg>
<div class="a t" id="t174" style="left:72px;top:389.96px;font-family:'Liberation Sans',sans-serif;font-size:16px;line-height:16px;color:#000;letter-spacing:-0.874px;">CEOCFR2</div>
<div class="a t" id="t175" style="left:285px;top:390.46px;font-family:'Liberation Sans',sans-serif;font-size:16px;line-height:16px;color:#000;letter-spacing:0.057px;">skipped</div>
<div class="a t" id="t176" style="left:486px;top:378.96px;font-family:'Liberation Sans',sans-serif;font-size:16px;line-height:16px;color:#000;letter-spacing:-0.893px;">EIEOCF0</div>
<div class="a t" id="t177" style="left:486px;top:401.46px;font-family:'Liberation Sans',sans-serif;font-size:16px;line-height:16px;color:#000;letter-spacing:0.057px;">skipped</div>
<div class="a t" id="t178" style="left:566px;top:378.96px;font-family:'Liberation Sans',sans-serif;font-size:16px;line-height:16px;color:#000;letter-spacing:-0.893px;">EIEOCF1</div>
<div class="a t" id="t179" style="left:566px;top:401.46px;font-family:'Liberation Sans',sans-serif;font-size:16px;line-height:16px;color:#000;letter-spacing:0.057px;">skipped</div>
<div class="a t" id="t180" style="left:646px;top:378.96px;font-family:'Liberation Sans',sans-serif;font-size:16px;line-height:16px;color:#000;letter-spacing:-0.893px;">EIEOCF2</div>
<div class="a t" id="t181" style="left:646px;top:401.46px;font-family:'Liberation Sans',sans-serif;font-size:16px;line-height:16px;color:#000;letter-spacing:0.057px;">skipped</div>
<div class="a t" id="t182" style="left:726px;top:378.96px;font-family:'Liberation Sans',sans-serif;font-size:16px;line-height:16px;color:#000;letter-spacing:-0.893px;">EIEOCF3</div>
<div class="a t" id="t183" style="left:726px;top:401.46px;font-family:'Liberation Sans',sans-serif;font-size:16px;line-height:16px;color:#000;letter-spacing:0.057px;">skipped</div>
<svg style="left:35.5px;top:438px" width="10" height="10" viewBox="0 0 10 10"><rect x="0.5" y="0.5" width="9" height="9" fill="#fff" stroke="#999"/><path d="M2 5h6" stroke="#000" stroke-width="1.2"/><path d="M5 2v6" stroke="#000" stroke-width="1.2"/></svg>
<div class="a" style="left:46px;top:443px;width:6px;height:1px;border-top:1px dotted #999;"></div>
<svg style="left:55px;top:439px" width="10" height="10" viewBox="0 0 10 10"><rect x="-3.8" y="-2.6" width="7.6" height="5.2" transform="translate(5 5) rotate(45)" fill="#f0e878" stroke="#333" stroke-width="1.1"/></svg>
<div class="a t" id="t184" style="left:72px;top:435.96px;font-family:'Liberation Sans',sans-serif;font-size:16px;line-height:16px;color:#000;letter-spacing:-0.974px;">IMR</div>
<div class="a t" id="t185" style="left:285px;top:436.46px;font-family:'Liberation Sans',sans-serif;font-size:16px;line-height:16px;color:#000;letter-spacing:0.057px;">skipped</div>
<div class="a t" id="t186" style="left:486px;top:424.96px;font-family:'Liberation Sans',sans-serif;font-size:16px;line-height:16px;color:#000;letter-spacing:-1.071px;">MSKECH</div>
<div class="a t" id="t187" style="left:486px;top:447.46px;font-family:'Liberation Sans',sans-serif;font-size:16px;line-height:16px;color:#000;letter-spacing:0.057px;">skipped</div>
<div class="a t" id="t188" style="left:566px;top:424.96px;font-family:'Liberation Sans',sans-serif;font-size:16px;line-height:16px;color:#000;letter-spacing:-1.085px;">MSKEOC</div>
<div class="a t" id="t189" style="left:566px;top:447.46px;font-family:'Liberation Sans',sans-serif;font-size:16px;line-height:16px;color:#000;letter-spacing:0.057px;">skipped</div>
<div class="a t" id="t190" style="left:646px;top:424.96px;font-family:'Liberation Sans',sans-serif;font-size:16px;line-height:16px;color:#000;letter-spacing:-0.999px;">MSKJECH</div>
<div class="a t" id="t191" style="left:646px;top:447.46px;font-family:'Liberation Sans',sans-serif;font-size:16px;line-height:16px;color:#000;letter-spacing:0.057px;">skipped</div>
<div class="a t" id="t192" style="left:726px;top:424.96px;font-family:'Liberation Sans',sans-serif;font-size:16px;line-height:16px;color:#000;letter-spacing:-1.011px;">MSKJEOC</div>
<div class="a t" id="t193" style="left:726px;top:447.46px;font-family:'Liberation Sans',sans-serif;font-size:16px;line-height:16px;color:#000;letter-spacing:0.057px;">skipped</div>
<svg style="left:35.5px;top:484px" width="10" height="10" viewBox="0 0 10 10"><rect x="0.5" y="0.5" width="9" height="9" fill="#fff" stroke="#999"/><path d="M2 5h6" stroke="#000" stroke-width="1.2"/><path d="M5 2v6" stroke="#000" stroke-width="1.2"/></svg>
<div class="a" style="left:46px;top:489px;width:6px;height:1px;border-top:1px dotted #999;"></div>
<svg style="left:55px;top:485px" width="10" height="10" viewBox="0 0 10 10"><rect x="-3.8" y="-2.6" width="7.6" height="5.2" transform="translate(5 5) rotate(45)" fill="#f0e878" stroke="#333" stroke-width="1.1"/></svg>
<div class="a t" id="t194" style="left:72px;top:481.96px;font-family:'Liberation Sans',sans-serif;font-size:16px;line-height:16px;color:#000;letter-spacing:-0.845px;">CIMR0</div>
<div class="a t" id="t195" style="left:285px;top:482.46px;font-family:'Liberation Sans',sans-serif;font-size:16px;line-height:16px;color:#000;letter-spacing:0.057px;">skipped</div>
<div class="a t" id="t196" style="left:486px;top:470.96px;font-family:'Liberation Sans',sans-serif;font-size:16px;line-height:16px;color:#000;letter-spacing:-0.839px;">PIEOCIEN0</div>
<div class="a t" id="t197" style="left:486px;top:493.46px;font-family:'Liberation Sans',sans-serif;font-size:16px;line-height:16px;color:#000;letter-spacing:0.057px;">skipped</div>
<div class="a t" id="t198" style="left:606px;top:470.96px;font-family:'Liberation Sans',sans-serif;font-size:16px;line-height:16px;color:#000;letter-spacing:-0.839px;">PIEOCIEN1</div>
<div class="a t" id="t199" style="left:606px;top:493.46px;font-family:'Liberation Sans',sans-serif;font-size:16px;line-height:16px;color:#000;letter-spacing:0.057px;">skipped</div>
<div class="a t" id="t200" style="left:726px;top:470.96px;font-family:'Liberation Sans',sans-serif;font-size:16px;line-height:16px;color:#000;letter-spacing:-0.839px;">PIEOCIEN2</div>
<div class="a t" id="t201" style="left:726px;top:493.46px;font-family:'Liberation Sans',sans-serif;font-size:16px;line-height:16px;color:#000;letter-spacing:0.057px;">skipped</div>
<svg style="left:35.5px;top:530px" width="10" height="10" viewBox="0 0 10 10"><rect x="0.5" y="0.5" width="9" height="9" fill="#fff" stroke="#999"/><path d="M2 5h6" stroke="#000" stroke-width="1.2"/><path d="M5 2v6" stroke="#000" stroke-width="1.2"/></svg>
<div class="a" style="left:46px;top:535px;width:6px;height:1px;border-top:1px dotted #999;"></div>
<svg style="left:55px;top:531px" width="10" height="10" viewBox="0 0 10 10"><rect x="-3.8" y="-2.6" width="7.6" height="5.2" transform="translate(5 5) rotate(45)" fill="#f0e878" stroke="#333" stroke-width="1.1"/></svg>
<div class="a t" id="t202" style="left:72px;top:527.96px;font-family:'Liberation Sans',sans-serif;font-size:16px;line-height:16px;color:#000;letter-spacing:-0.845px;">CIMR1</div>
<div class="a t" id="t203" style="left:285px;top:528.46px;font-family:'Liberation Sans',sans-serif;font-size:16px;line-height:16px;color:#000;letter-spacing:0.057px;">skipped</div>
<div class="a t" id="t204" style="left:486px;top:516.96px;font-family:'Liberation Sans',sans-serif;font-size:16px;line-height:16px;color:#000;letter-spacing:-0.839px;">SIEOCIEN0</div>
<div class="a t" id="t205" style="left:486px;top:539.46px;font-family:'Liberation Sans',sans-serif;font-size:16px;line-height:16px;color:#000;letter-spacing:0.057px;">skipped</div>
<div class="a t" id="t206" style="left:606px;top:516.96px;font-family:'Liberation Sans',sans-serif;font-size:16px;line-height:16px;color:#000;letter-spacing:-0.839px;">SIEOCIEN1</div>
<div class="a t" id="t207" style="left:606px;top:539.46px;font-family:'Liberation Sans',sans-serif;font-size:16px;line-height:16px;color:#000;letter-spacing:0.057px;">skipped</div>
<div class="a t" id="t208" style="left:726px;top:516.96px;font-family:'Liberation Sans',sans-serif;font-size:16px;line-height:16px;color:#000;letter-spacing:-0.839px;">SIEOCIEN2</div>
<div class="a t" id="t209" style="left:726px;top:539.46px;font-family:'Liberation Sans',sans-serif;font-size:16px;line-height:16px;color:#000;letter-spacing:0.057px;">skipped</div>
<svg style="left:35.5px;top:576px" width="10" height="10" viewBox="0 0 10 10"><rect x="0.5" y="0.5" width="9" height="9" fill="#fff" stroke="#999"/><path d="M2 5h6" stroke="#000" stroke-width="1.2"/><path d="M5 2v6" stroke="#000" stroke-width="1.2"/></svg>
<div class="a" style="left:46px;top:581px;width:6px;height:1px;border-top:1px dotted #999;"></div>
<svg style="left:55px;top:577px" width="10" height="10" viewBox="0 0 10 10"><rect x="-3.8" y="-2.6" width="7.6" height="5.2" transform="translate(5 5) rotate(45)" fill="#f0e878" stroke="#333" stroke-width="1.1"/></svg>
<div class="a t" id="t210" style="left:72px;top:573.96px;font-family:'Liberation Sans',sans-serif;font-size:16px;line-height:16px;color:#000;letter-spacing:-0.845px;">CIMR2</div>
<div class="a t" id="t211" style="left:285px;top:574.46px;font-family:'Liberation Sans',sans-serif;font-size:16px;line-height:16px;color:#000;letter-spacing:0.057px;">skipped</div>
<div class="a t" id="t212" style="left:486px;top:562.96px;font-family:'Liberation Sans',sans-serif;font-size:16px;line-height:16px;color:#000;letter-spacing:-0.839px;">SIEOCIEN0</div>
<div class="a t" id="t213" style="left:486px;top:585.46px;font-family:'Liberation Sans',sans-serif;font-size:16px;line-height:16px;color:#000;letter-spacing:0.057px;">skipped</div>
<div class="a t" id="t214" style="left:606px;top:562.96px;font-family:'Liberation Sans',sans-serif;font-size:16px;line-height:16px;color:#000;letter-spacing:-0.839px;">SIEOCIEN1</div>
<div class="a t" id="t215" style="left:606px;top:585.46px;font-family:'Liberation Sans',sans-serif;font-size:16px;line-height:16px;color:#000;letter-spacing:0.057px;">skipped</div>
<div class="a t" id="t216" style="left:726px;top:562.96px;font-family:'Liberation Sans',sans-serif;font-size:16px;line-height:16px;color:#000;letter-spacing:-0.839px;">SIEOCIEN2</div>
<div class="a t" id="t217" style="left:726px;top:585.46px;font-family:'Liberation Sans',sans-serif;font-size:16px;line-height:16px;color:#000;letter-spacing:0.057px;">skipped</div>
</div>
<div class="a" style="left:1895px;top:282px;width:25px;height:634px;background:#f0f0f0;"></div>
<svg style="left:1901.0px;top:293.5px" width="12" height="9" viewBox="0 0 12 9"><path d="M1 7L6 2L11 7" fill="none" stroke="#606060" stroke-width="2.7"/></svg>
<div class="a" style="left:1895px;top:314px;width:25px;height:26px;background:#cdcdcd;"></div>
<svg style="left:1901.0px;top:897.5px" width="12" height="9" viewBox="0 0 12 9"><path d="M1 2L6 7L11 2" fill="none" stroke="#606060" stroke-width="2.7"/></svg>
<div class="a" style="left:1134px;top:916px;width:786px;height:24px;background:#f0f0f0;"></div>
<svg style="left:1142.5px;top:922.0px" width="9" height="12" viewBox="0 0 9 12"><path d="M7 1L2 6L7 11" fill="none" stroke="#606060" stroke-width="2.7"/></svg>
<div class="a" style="left:1160px;top:916px;width:388px;height:24px;background:#cdcdcd;"></div>
<svg style="left:1876.5px;top:922.0px" width="9" height="12" viewBox="0 0 9 12"><path d="M2 1L7 6L2 11" fill="none" stroke="#606060" stroke-width="2.7"/></svg>
<div class="a" style="left:5px;top:948px;width:1916px;height:33px;background:#cdd2dd;border:1px solid #b4b4b4;"></div>
<div class="a t" id="t218" style="left:11px;top:956.61px;font-family:'Liberation Sans',sans-serif;font-size:17px;line-height:17px;color:#000;letter-spacing:1.219px;">Memory</div>
<svg style="left:1871px;top:957.5px" width="10" height="13" viewBox="0 0 10 13"><path d="M1 5.5L5 1L9 5.5z M1 7.5L5 12L9 7.5z" fill="#000"/></svg>
<svg style="left:1900.5px;top:959.0px" width="10" height="10" viewBox="0 0 10 10"><path d="M0.5 0.5L9.5 9.5M9.5 0.5L0.5 9.5" stroke="#000" stroke-width="1.45"/></svg>
<div class="a" style="left:0px;top:981px;width:1920px;height:2px;background:#c8c8c8;"></div>
<div class="a" style="left:0px;top:983px;width:1920px;height:37px;background:#f0f0f0;"></div>
<div class="a t" id="t219" style="left:12px;top:994.61px;font-family:'Liberation Sans',sans-serif;font-size:17px;line-height:17px;color:#000;letter-spacing:-0.160px;">Ready</div>
<div class="a" style="left:1317px;top:987px;width:299px;height:28px;background:#f0f0f0;border-left:1px solid #a0a0a0;border-top:1px solid #a0a0a0;border-right:1px solid #fff;border-bottom:1px solid #fff;"></div>
<div class="a t" id="t220" style="left:1359px;top:994.61px;font-family:'Liberation Sans',sans-serif;font-size:17px;line-height:17px;color:#000;letter-spacing:0.284px;">Ln 2820, Col 1, Zoom 100%</div>
<div class="a" style="left:1619px;top:987px;width:298px;height:27px;background:#00ef00;"></div>
<div class="a t" id="t221" style="left:1751px;top:995.61px;font-family:'Liberation Sans',sans-serif;font-size:17px;line-height:17px;color:#000;letter-spacing:-0.672px;">RUN</div>
<div class="a" style="left:1337px;top:977px;width:80px;height:30px;background:#fff;border:1px solid #767676;"></div>
<div class="a t" id="t222" style="left:1343px;top:985.03px;font-family:'Liberation Sans',sans-serif;font-size:16.5px;line-height:16.5px;color:#575757;letter-spacing:1.581px;">Memory</div>
<div class="a" style="left:0px;top:1020px;width:1920px;height:60px;background:linear-gradient(90deg,#283b48 0%,#23354d 40%,#1f2d50 100%);"></div>
<div class="a" style="left:0px;top:1020px;width:3px;height:60px;background:#20245e;"></div>
<svg style="left:27px;top:1038px" width="24" height="24" viewBox="0 0 24 24"><path d="M0 3.3L9.8 2V11.3H0z M11 1.8L24 0V11.3H11z M0 12.5H9.8V22L0 20.7z M11 12.5H24V24L11 22.2z" fill="#fff"/></svg>
<div class="a" style="left:75px;top:1020px;width:516px;height:60px;background:#f0f0f0;border:1px solid #c8c8c8;border-bottom:none;"></div>
<svg style="left:92px;top:1037px" width="25" height="25" viewBox="0 0 25 25"><circle cx="15" cy="9" r="7.5" fill="none" stroke="#222" stroke-width="1.7"/><path d="M9.5 14.5L1.5 22.5" stroke="#222" stroke-width="1.9"/></svg>
<div class="a t" id="t223" style="left:135px;top:1041.38px;font-family:'Liberation Sans',sans-serif;font-size:22px;line-height:22px;color:#333;letter-spacing:0.225px;">Type here to search</div>
<div class="a" style="left:477px;top:1026px;width:108px;height:48px;background:#141414;border-radius:9px;"></div>
<div class="a t" id="t224" style="left:484px;top:1041.19px;font-family:'Liberation Sans',sans-serif;font-size:17.5px;line-height:17.5px;color:#2a6fc8;font-weight:700;letter-spacing:1.911px;-webkit-text-stroke:0.6px #2a6fc8;">TATA</div>
<div class="a t" id="t225" style="left:537px;top:1042.46px;font-family:'Liberation Sans',sans-serif;font-size:16px;line-height:16px;color:#2a6fc8;font-weight:700;letter-spacing:-0.934px;">ELXSI</div>
<svg style="left:612px;top:1035px" width="26" height="30" viewBox="0 0 26 30"><rect x="2" y="7" width="14" height="15" fill="none" stroke="#fff" stroke-width="1.4"/><path d="M0 4h18M0 25h18M22 1v28M20 11h4" stroke="#fff" stroke-width="1.4"/></svg>
<svg style="left:686px;top:1032px" width="36" height="36" viewBox="0 0 36 36"><defs><linearGradient id="eg" x1="0.1" y1="0.6" x2="0.9" y2="0.2"><stop offset="0" stop-color="#1a8ae6"/><stop offset="0.5" stop-color="#2ab0e0"/><stop offset="1" stop-color="#62da6a"/></linearGradient></defs><path d="M18 0C28 0 36 7 36 16c0 5-4 8-9 8-4 0-6-2-6-4 0-2 1-3 1-5-1-3-4-4-7-4-6 0-10 5-10 11 0 8 7 14 15 14-3 1-5 1-7 1C8 37 0 29 0 18 0 8 8 0 18 0z" fill="url(#eg)"/><path d="M5 19c0-6 4-11 10-11 3 0 6 1 7 4-2-1-4-1-6 0-4 2-4 6-3 9 2 5 8 8 15 7-3 4-8 7-13 7C9 35 5 27 5 19z" fill="#0f5bb5"/></svg>
<svg style="left:762px;top:1037px" width="34" height="27" viewBox="0 0 34 27"><path d="M0 2a2 2 0 0 1 2-2h9l3 3h17a2 2 0 0 1 2 2v2H0z" fill="#e3a21a"/><rect x="0" y="5" width="33" height="21" rx="2" fill="#fcd462"/><path d="M6 26V16a3 3 0 0 1 3-3h14a3 3 0 0 1 3 3v10h-4v-6h-12v6z" fill="#3a8ee0"/></svg>
<svg style="left:836px;top:1031px" width="36" height="36" viewBox="0 0 36 36"><path d="M11 10V7q0-6 7-6t7 6v3" fill="none" stroke="#fff" stroke-width="1.6"/><path d="M13 10V7q0-4 5-4t5 4v3" fill="none" stroke="#fff" stroke-width="1"/><rect x="1" y="9" width="34" height="26" rx="2" fill="#fff"/><rect x="10" y="15" width="7" height="7" fill="#f25022"/><rect x="19" y="15" width="7" height="7" fill="#7fba00"/><rect x="10" y="24" width="7" height="7" fill="#00a4ef"/><rect x="19" y="24" width="7" height="7" fill="#ffb900"/></svg>
<svg style="left:910px;top:1033px" width="37" height="31" viewBox="0 0 37 31"><path d="M0 9L18 0L36 9V30H0z" fill="#fff"/><path d="M0 9L36 9L21 15L29 23L20 16L0 9z" fill="#243a4b"/></svg>
<div class="a" style="left:968px;top:1020px;width:73px;height:60px;background:#3e4d62;"></div>
<svg style="left:986px;top:1032px" width="36" height="36" viewBox="0 0 24 24"><circle cx="12" cy="12" r="12" fill="#1f66b3"/><path d="M7.5 0.4H16.5L12 5.6z" fill="#fff"/><path d="M0.5 9.8L4.6 4.2L5 9.2z" fill="#fff"/><path d="M23.5 9.8L19.4 4.2L19 9.2z" fill="#fff"/><circle cx="12" cy="13.6" r="8.4" fill="#1f66b3" stroke="#fff" stroke-width="0.9"/><path d="M6.8 10.2L9.2 19L12 13.2L14.8 19L17.2 10.2" fill="none" stroke="#fff" stroke-width="2.1" stroke-linejoin="round"/></svg>
<svg style="left:1062px;top:1033px" width="35" height="34" viewBox="0 0 35 34"><defs><linearGradient id="np" x1="0" y1="0" x2="0" y2="1"><stop offset="0" stop-color="#fff"/><stop offset="0.45" stop-color="#e8f4d0"/><stop offset="1" stop-color="#56c020"/></linearGradient></defs><path d="M1.5 2.5h20l3 3v26h-23z" fill="url(#np)" stroke="#999"/><path d="M3 3v2M5 3v2M7 3v2M9 3v2M11 3v2M13 3v2M15 3v2M17 3v2" stroke="#555" stroke-width="0.8"/><ellipse cx="11" cy="17" rx="6" ry="5" fill="#7cc840" stroke="#2a6a10" stroke-width="0.8"/><circle cx="13" cy="11" r="2.2" fill="#fff" stroke="#222" stroke-width="0.8"/><circle cx="17" cy="11" r="2.2" fill="#fff" stroke="#222" stroke-width="0.8"/><path d="M33 1L21 26" stroke="#e0a020" stroke-width="2.6"/><path d="M33 1l-1.5 3" stroke="#c03020" stroke-width="2.6"/></svg>
<svg style="left:1135px;top:1032px" width="36" height="36" viewBox="0 0 36 36"><ellipse cx="18" cy="18" rx="7.5" ry="18" transform="rotate(45 18 18)" fill="#0c9a1a"/><path d="M3 3L33 33" stroke="#9ad0b0" stroke-width="2"/><path d="M1 4l3-3 4 5-2 2z M35 32l-3 3-4-5 2-2z" fill="#9ad0b0"/><ellipse cx="18" cy="18" rx="3.5" ry="5.5" transform="rotate(45 18 18)" fill="#555"/></svg>
<svg style="left:1210px;top:1033px" width="40" height="40" viewBox="0 0 40 40"><circle cx="29" cy="7.5" r="4" fill="#7b83eb"/><circle cx="20" cy="6" r="5.5" fill="#7b83eb"/><rect x="24" y="12" width="10" height="14" rx="3" fill="#5059c9"/><path d="M13 12h15v14a8 8 0 0 1-15 0z" fill="#7b83eb"/><rect x="0" y="9" width="18" height="18" rx="2" fill="#4b53bc"/><text x="4.5" y="23.5" font-size="14" font-weight="bold" font-family="Liberation Sans" fill="#fff">T</text><circle cx="30" cy="29" r="9.5" fill="#d01f3c"/><text x="25" y="34.5" font-size="15" font-weight="bold" font-family="Liberation Sans" fill="#fff">8</text></svg>
<svg style="left:1287px;top:1035px" width="33" height="27" viewBox="0 0 33 27"><rect x="0.5" y="0.5" width="32" height="26" fill="#000" stroke="#aaa"/><rect x="1" y="1" width="31" height="3" fill="#ccc"/><path d="M4 8h2M7 8h1M9 7l4 4M14 11h5" stroke="#ccc" stroke-width="1.2"/></svg>
<div class="a" style="left:674px;top:1076px;width:61px;height:4px;background:#76b9ed;"></div>
<div class="a" style="left:749px;top:1076px;width:61px;height:4px;background:#76b9ed;"></div>
<div class="a" style="left:968px;top:1076px;width:73px;height:4px;background:#76b9ed;"></div>
<div class="a" style="left:1049px;top:1076px;width:61px;height:4px;background:#76b9ed;"></div>
<div class="a" style="left:1124px;top:1076px;width:61px;height:4px;background:#76b9ed;"></div>
<div class="a" style="left:1199px;top:1076px;width:61px;height:4px;background:#76b9ed;"></div>
<div class="a" style="left:1274px;top:1076px;width:61px;height:4px;background:#76b9ed;"></div>
<svg style="left:1467px;top:1032px" width="38" height="30" viewBox="0 0 38 30"><ellipse cx="18" cy="21" rx="17" ry="8" fill="#cfe3f8"/><circle cx="14" cy="16" r="8" fill="#d8e8fa"/><circle cx="24" cy="15" r="10" fill="#e6f0fc"/><rect x="2" y="19" width="34" height="10" rx="5" fill="#bcd4f0"/><circle cx="32" cy="4" r="4" fill="#e02a2a"/></svg>
<div class="a t" id="t226" style="left:1517px;top:1042.22px;font-family:'Liberation Sans',sans-serif;font-size:21px;line-height:21px;color:#fff;letter-spacing:-1.141px;">30°C</div>
<svg style="left:1586px;top:1045px" width="18" height="10" viewBox="0 0 18 10"><path d="M1 9L9 1L17 9" fill="none" stroke="#fff" stroke-width="1.4"/></svg>
<svg style="left:1619px;top:1042px" width="25" height="19" viewBox="0 0 25 19"><rect x="0.5" y="0.5" width="6" height="5" fill="none" stroke="#fff"/><rect x="3.5" y="2.5" width="20" height="12" fill="none" stroke="#fff" stroke-width="1.2"/><path d="M14 15v3M9 18h10M3.5 6v12" stroke="#fff" stroke-width="1.2"/></svg>
<svg style="left:1656px;top:1041px" width="24" height="20" viewBox="0 0 24 20"><path d="M1 7h4l5-5v16l-5-5H1z" fill="none" stroke="#fff" stroke-width="1.2"/><path d="M14 6q2 4 0 8M17 4q3 6 0 12M20 2q4 8 0 16" fill="none" stroke="#fff" stroke-width="1.2"/></svg>
<div class="a t" id="t227" style="left:1695px;top:1029.19px;font-family:'Liberation Sans',sans-serif;font-size:17.5px;line-height:17.5px;color:#fff;letter-spacing:-1.219px;">ENG</div>
<div class="a t" id="t228" style="left:1703px;top:1055.19px;font-family:'Liberation Sans',sans-serif;font-size:17.5px;line-height:17.5px;color:#fff;">IN</div>
<div class="a t" id="t229" style="left:1758px;top:1029.19px;font-family:'Liberation Sans',sans-serif;font-size:17.5px;line-height:17.5px;color:#fff;letter-spacing:0.052px;">5:43 PM</div>
<div class="a t" id="t230" style="left:1755px;top:1055.19px;font-family:'Liberation Sans',sans-serif;font-size:17.5px;line-height:17.5px;color:#fff;letter-spacing:0.768px;">1/6/2023</div>
<svg style="left:1860px;top:1037px" width="36" height="36" viewBox="0 0 36 36"><path d="M1 1h24v18H10l-5 5v-5H1z" fill="#fff"/><path d="M6 6h14M6 10h14M6 14h10" stroke="#333" stroke-width="1.2"/><circle cx="24" cy="24" r="11" fill="#3a3a3a" stroke="#777" stroke-width="1.5"/><text x="20" y="30" font-size="15" font-weight="bold" font-family="Liberation Sans" fill="#fff">1</text></svg>
<div class="a" style="left:1915px;top:1020px;width:2px;height:60px;background:#5a6a8a;"></div></body></html>
